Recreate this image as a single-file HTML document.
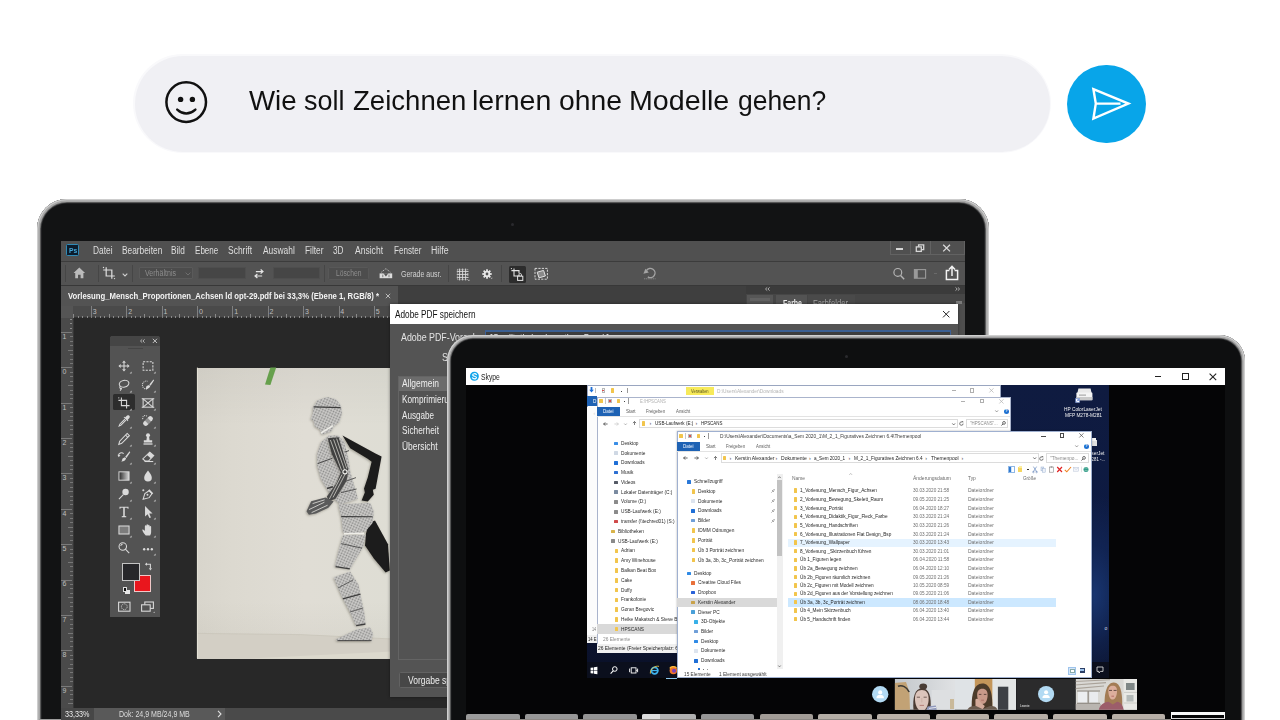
<!DOCTYPE html>
<html lang="de">
<head>
<meta charset="utf-8">
<title>Zeichnen lernen</title>
<style>
html,body{margin:0;padding:0;background:#fff;}
body{width:1280px;height:720px;overflow:hidden;position:relative;font-family:"Liberation Sans",sans-serif;color:#000;}
*{box-sizing:border-box;}
.abs,.abs>*{position:absolute;}
.t{position:absolute;white-space:nowrap;transform-origin:0 50%;line-height:1;}
svg{position:absolute;overflow:visible;}
/* page-coordinate canvas used inside clipped screens */
.pg{position:absolute;width:1280px;height:720px;}
</style>
</head>
<body>
<!-- ===== chat input ===== -->
<div style="position:absolute;left:133px;top:54px;width:918.4px;height:99.4px;border-radius:50px;background:#f9f9fb;"></div>
<div style="position:absolute;left:134.6px;top:56px;width:915.6px;height:95.8px;border-radius:48px;background:#f0f0f4;"></div>
<svg style="left:160px;top:76px" width="52" height="52" viewBox="160 76 52 52">
  <circle cx="186.2" cy="102.1" r="19.8" fill="none" stroke="#111" stroke-width="2.5"/>
  <circle cx="180.6" cy="99.4" r="2.7" fill="#111"/>
  <circle cx="192.4" cy="99.4" r="2.7" fill="#111"/>
  <path d="M177.2 109.6 Q186.2 117.6 195.4 109.6" fill="none" stroke="#111" stroke-width="2.4" stroke-linecap="round"/>
</svg>
<div class="t" style="left:249.0px;top:86.4px;font-size:28.2px;color:#111;transform:scaleX(0.980);">Wie</div>
<div class="t" style="left:304.0px;top:86.4px;font-size:28.2px;color:#111;transform:scaleX(0.956);">soll</div>
<div class="t" style="left:352.5px;top:86.4px;font-size:28.2px;color:#111;transform:scaleX(0.978);">Zeichnen</div>
<div class="t" style="left:472.3px;top:86.4px;font-size:28.2px;color:#111;transform:scaleX(1.013);">lernen</div>
<div class="t" style="left:559.0px;top:86.4px;font-size:28.2px;color:#111;transform:scaleX(1.004);">ohne</div>
<div class="t" style="left:629.4px;top:86.4px;font-size:28.2px;color:#111;transform:scaleX(1.016);">Modelle</div>
<div class="t" style="left:737.6px;top:86.4px;font-size:28.2px;color:#111;transform:scaleX(0.938);">gehen?</div>
<!-- send button -->
<div style="position:absolute;left:1067.4px;top:64.6px;width:78.4px;height:78.4px;border-radius:50%;background:#08a5e9;"></div>
<svg style="left:1067px;top:64px" width="80" height="80" viewBox="1067 64 80 80">
  <path d="M1093.4 89.2L1128.4 103.6L1093.4 118.6L1095.8 103.6Z M1095.8 103.6L1120.5 103.6" fill="none" stroke="#fff" stroke-width="2.4" stroke-linejoin="miter"/>
</svg>
<!-- ===== laptop 1 (Photoshop) ===== -->
<div style="position:absolute;left:37.4px;top:199.2px;width:951.2px;height:640px;border-radius:30px;background:#121314;box-shadow:inset 0 0 0 1.3px #cdcdcd,inset 0 0 0 3px #a6a6a6,inset 0 0 0 3.8px #666,inset 0 0 0 4.6px #2c2d2f;"></div>
<div style="position:absolute;left:511px;top:222.5px;width:3.4px;height:3.4px;border-radius:50%;background:#2a2a2e;"></div>
<!-- bottom strip --><div style="position:absolute;left:39px;top:718.8px;width:21.5px;height:1.2px;background:#9c9c9c;"></div>
<div id="ps" style="position:absolute;left:60.5px;top:240.7px;width:904.5px;height:480px;overflow:hidden;background:#282828;">
<div class="pg" style="left:-60.5px;top:-240.7px;">
<div style="position:absolute;left:60.5px;top:240.7px;width:904.5px;height:20.6px;background:#505050;"></div>
<div style="position:absolute;left:60.5px;top:240.4px;width:904.5px;height:1.0px;background:#6c6c6c;"></div>
<div style="position:absolute;left:60.5px;top:260.6px;width:904.5px;height:1.0px;background:#3c3c3c;"></div>
<div style="position:absolute;left:66.3px;top:244.2px;width:12.8px;height:11.7px;background:#0b1c2c;border:1px solid #2f8ab6;border-radius:1.5px;"></div>
<div class="t" style="left:68.6px;top:246.8px;font-size:7px;color:#45a9da;font-weight:bold;transform:scaleX(0.958);">Ps</div>
<div class="t" style="left:92.5px;top:245.6px;font-size:10px;color:#dedede;transform:scaleX(0.835);">Datei</div>
<div class="t" style="left:121.8px;top:245.6px;font-size:10px;color:#dedede;transform:scaleX(0.833);">Bearbeiten</div>
<div class="t" style="left:171.0px;top:245.6px;font-size:10px;color:#dedede;transform:scaleX(0.828);">Bild</div>
<div class="t" style="left:195.0px;top:245.6px;font-size:10px;color:#dedede;transform:scaleX(0.806);">Ebene</div>
<div class="t" style="left:228.0px;top:245.6px;font-size:10px;color:#dedede;transform:scaleX(0.847);">Schrift</div>
<div class="t" style="left:262.5px;top:245.6px;font-size:10px;color:#dedede;transform:scaleX(0.841);">Auswahl</div>
<div class="t" style="left:304.5px;top:245.6px;font-size:10px;color:#dedede;transform:scaleX(0.833);">Filter</div>
<div class="t" style="left:333.0px;top:245.6px;font-size:10px;color:#dedede;transform:scaleX(0.821);">3D</div>
<div class="t" style="left:354.5px;top:245.6px;font-size:10px;color:#dedede;transform:scaleX(0.854);">Ansicht</div>
<div class="t" style="left:393.8px;top:245.6px;font-size:10px;color:#dedede;transform:scaleX(0.811);">Fenster</div>
<div class="t" style="left:431.0px;top:245.6px;font-size:10px;color:#dedede;transform:scaleX(0.875);">Hilfe</div>
<div style="position:absolute;left:890px;top:241px;width:74.5px;height:13.5px;border:1px solid #626262;border-top:none;"></div>
<div style="position:absolute;left:910.0px;top:241.0px;width:1.0px;height:13.0px;background:#626262;"></div>
<div style="position:absolute;left:929.5px;top:241.0px;width:1.0px;height:13.0px;background:#626262;"></div>
<div style="position:absolute;left:896.3px;top:248.3px;width:7.2px;height:2.0px;background:#d6d6d6;"></div>
<svg style="left:914px;top:243px" width="12" height="10" viewBox="914 243 12 10"><path d="M918.6 246.8V244.9H923.7V249.6H921.6" fill="none" stroke="#d6d6d6" stroke-width="1.3"/><rect x="916.3" y="246.9" width="5" height="4.5" fill="none" stroke="#d6d6d6" stroke-width="1.3"/></svg>
<svg style="left:942px;top:244px" width="9" height="9" viewBox="942 244 9 9"><path d="M943.2 244.8L950 251.4M950 244.8L943.2 251.4" stroke="#dadada" stroke-width="1.3" fill="none"/></svg>
<div style="position:absolute;left:60.5px;top:261.6px;width:904.5px;height:23.2px;background:#535353;"></div>
<div style="position:absolute;left:60.5px;top:284.6px;width:904.5px;height:1.0px;background:#383838;"></div>
<svg style="left:73.4px;top:267.4px" width="13" height="12.1" viewBox="73 267 14 13"><path d="M79.8 267.6L73.6 273.4H75.4V279.2H78.4V275.4H81.2V279.2H84.2V273.4H86L79.8 267.6Z" fill="#bcbcbc"/></svg>
<div style="position:absolute;left:64.8px;top:265.2px;width:1.0px;height:16.4px;background:#464646;"></div>
<div style="position:absolute;left:97.9px;top:265.2px;width:1.0px;height:16.4px;background:#464646;"></div>
<div style="position:absolute;left:132.3px;top:265.2px;width:1.0px;height:16.4px;background:#464646;"></div>
<div style="position:absolute;left:323.9px;top:265.2px;width:1.0px;height:16.4px;background:#464646;"></div>
<div style="position:absolute;left:447.5px;top:265.2px;width:1.0px;height:16.4px;background:#464646;"></div>
<div style="position:absolute;left:501.3px;top:265.2px;width:1.0px;height:16.4px;background:#464646;"></div>
<svg style="left:101.2px;top:264.8px" width="16" height="16" viewBox="-8 -8 16 16"><g transform="scale(0.88)" fill="none" stroke="#dcdcdc" stroke-width="1.4"><path d="M-3.2 -6.6V3.4H6.6M-6.6 -3.4H3.2V6.6"/></g><circle cx="-5.5" cy="-5.5" r="0.7" fill="#dcdcdc"/><circle cx="5.5" cy="5.6" r="0.7" fill="#dcdcdc"/></svg>
<svg style="left:121.6px;top:273px" width="6" height="4" viewBox="0 0 6 4"><path d="M0.7 0.7L3 3L5.3 0.7" fill="none" stroke="#cfcfcf" stroke-width="1.1"/></svg>
<div style="position:absolute;left:138.8px;top:267.2px;width:53.8px;height:12px;background:#4c4c4c;border:1px solid #5a5a5a;border-radius:1px;"></div>
<div class="t" style="left:144.5px;top:269.1px;font-size:8.5px;color:#8d8d8d;transform:scaleX(0.830);">Verhältnis</div>
<svg style="left:185px;top:272px" width="6" height="4" viewBox="0 0 6 4"><path d="M0.6 0.6L3 3L5.4 0.6" fill="none" stroke="#6e6e6e" stroke-width="1"/></svg>
<div style="position:absolute;left:198.3px;top:267.2px;width:47.3px;height:12px;background:#464646;border:1px solid #4e4e4e;"></div>
<div style="position:absolute;left:272.5px;top:267.2px;width:47.5px;height:12px;background:#464646;border:1px solid #4e4e4e;"></div>
<svg style="left:253.9px;top:268.6px" width="10.2" height="9.4" viewBox="253 268 12 11"><path d="M255.2 271H263.4M260.8 268.6L263.6 271L260.8 273.4M262.6 276.2H254.4M257 273.8L254.2 276.2L257 278.6" fill="none" stroke="#e4e4e4" stroke-width="1.4"/></svg>
<div style="position:absolute;left:328px;top:266.6px;width:40.8px;height:13.4px;background:#4d4d4d;border:1px solid #585858;border-radius:1.5px;"></div>
<div class="t" style="left:336.0px;top:269.1px;font-size:8.5px;color:#8e8e8e;transform:scaleX(0.793);">Löschen</div>
<svg style="left:378px;top:267px" width="16" height="13" viewBox="378 267 16 13"><rect x="379.6" y="273.4" width="12.6" height="4.8" fill="#dcdcdc"/><path d="M383.4 273.2L385.9 276.6L388.4 273.2Z" fill="#535353"/><path d="M382.8 274.6V277.2M389 274.6V277.2" stroke="#535353" stroke-width="0.7"/><path d="M381.4 272.2L385.9 268.6L390.4 272.2" fill="none" stroke="#cfcfcf" stroke-width="0.9" stroke-dasharray="1.2 1"/></svg>
<div class="t" style="left:400.5px;top:269.5px;font-size:9px;color:#d2d2d2;transform:scaleX(0.778);">Gerade ausr.</div>
<svg style="left:456px;top:268px" width="14" height="14" viewBox="456 268 14 14"><path d="M459.6 268.6V280.4M462.6 268.6V280.4M465.6 268.6V280.4M456.8 271.4H468.4M456.8 274.4H468.4M456.8 277.4H468.4" stroke="#dedede" stroke-width="0.9" fill="none"/><path d="M457.4 269.4H467.8V279.6H457.4Z" stroke="#d0d0d0" stroke-width="0.8" fill="none" stroke-dasharray="1 1"/><path d="M469.4 279.4V281H467.8Z" fill="#cfcfcf"/></svg>
<svg style="left:480px;top:267.4px" width="14" height="14" viewBox="-8.6 -8.6 17.2 17.2"><g fill="#e6e6e6"><circle r="3.9"/><rect x="-1.1" y="-5.8" width="2.2" height="11.6"/><rect x="-5.8" y="-1.1" width="11.6" height="2.2"/><g transform="rotate(45)"><rect x="-1.1" y="-5.8" width="2.2" height="11.6"/><rect x="-5.8" y="-1.1" width="11.6" height="2.2"/></g></g><circle r="1.7" fill="#535353"/><path d="M4.6 5.8h1.8v-1.8z" fill="#d0d0d0"/></svg>
<div style="position:absolute;left:508.8px;top:266.0px;width:16.8px;height:17.0px;background:#2c2c2c;border-radius:1.5px;"></div>
<svg style="left:509px;top:266px" width="17" height="17" viewBox="509 266 17 17"><path d="M514 268.4V276H520.6M511.4 270.6H519V273.6" fill="none" stroke="#e4e4e4" stroke-width="1.1"/><circle cx="511.4" cy="268.6" r="0.6" fill="#e4e4e4"/><rect x="517.6" y="276.2" width="5.2" height="4.2" fill="#2c2c2c" stroke="#e4e4e4" stroke-width="1"/><path d="M518.9 276V274.8A1.3 1.3 0 0 1 521.5 274.8V276" fill="none" stroke="#e4e4e4" stroke-width="0.9"/></svg>
<svg style="left:534px;top:267px" width="15" height="14" viewBox="534 267 15 14"><rect x="535" y="268.4" width="12.4" height="10.8" fill="none" stroke="#d6d6d6" stroke-width="1" stroke-dasharray="2.2 1.2"/><path d="M537.2 272.2L543.6 270.4L545.4 276L539 277.8Z" fill="#8a8a8a" stroke="#e4e4e4" stroke-width="1"/></svg>
<svg style="left:642px;top:266px" width="16" height="15" viewBox="642 266 16 15"><path d="M646.6 270.4A4.6 4.6 0 1 1 647.8 276.8" fill="none" stroke="#a4a4a4" stroke-width="1.4"/><path d="M643.4 273.8L648.8 272.6L645.4 268.8Z" fill="#a4a4a4"/><path d="M644 278.8H655.6" stroke="#8c8c8c" stroke-width="0.9" stroke-dasharray="1.2 0.6"/></svg>
<svg style="left:892px;top:267px" width="14" height="14" viewBox="892 267 14 14"><circle cx="897.8" cy="272.4" r="3.9" fill="none" stroke="#b4b4b4" stroke-width="1.2"/><path d="M900.6 275.4L904.2 279.2" stroke="#b4b4b4" stroke-width="1.4"/></svg>
<svg style="left:913px;top:268px" width="14" height="12" viewBox="913 268 14 12"><rect x="914.4" y="269.6" width="11.2" height="8.6" fill="none" stroke="#9a9a9a" stroke-width="1.1"/><rect x="914.4" y="269.6" width="3.4" height="8.6" fill="#9a9a9a"/></svg>
<svg style="left:944px;top:265px" width="16" height="16" viewBox="944 265 16 16"><path d="M949.4 270.6H946.4V279.6H957.6V270.6H954.6" fill="none" stroke="#f2f2f2" stroke-width="1.5"/><path d="M952 276V266.8M949 269.6L952 266.4L955 269.6" fill="none" stroke="#f2f2f2" stroke-width="1.5"/></svg>
<div style="position:absolute;left:934.0px;top:273.4px;width:3.0px;height:1.0px;background:#6a6a6a;"></div>
<div style="position:absolute;left:60.5px;top:285.6px;width:904.5px;height:20.0px;background:#3f3f3f;"></div>
<div style="position:absolute;left:60.5px;top:285.6px;width:337.5px;height:20.0px;background:#535353;"></div>
<div class="t" style="left:68.0px;top:291.9px;font-size:9px;color:#f4f4f4;font-weight:bold;transform:scaleX(0.858);">Vorlesung_Mensch_Proportionen_Achsen ld opt-29.pdf bei 33,3% (Ebene 1, RGB/8) *</div>
<svg style="left:385px;top:293px" width="6" height="6" viewBox="0 0 6 6"><path d="M0.8 0.8L5.2 5.2M5.2 0.8L0.8 5.2" stroke="#b8b8b8" stroke-width="1"/></svg>
<div style="position:absolute;left:746.0px;top:285.6px;width:219.0px;height:8.0px;background:#3b3b3b;"></div>
<svg style="left:764.5px;top:287.4px" width="5" height="4" viewBox="0 0 5 4"><path d="M2.2 0.4L0.5 2L2.2 3.6M4.6 0.4L2.9 2L4.6 3.6" fill="none" stroke="#c8c8c8" stroke-width="0.8"/></svg>
<svg style="left:955.0px;top:287.4px" width="5" height="4" viewBox="0 0 5 4"><path d="M0.5 0.4L2.2 2L0.5 3.6M2.9 0.4L4.6 2L2.9 3.6" fill="none" stroke="#c8c8c8" stroke-width="0.8"/></svg>
<div style="position:absolute;left:746.0px;top:293.6px;width:219.0px;height:14.0px;background:#464646;"></div>
<div style="position:absolute;left:747.0px;top:294.6px;width:26.0px;height:13.0px;background:#565656;"></div>
<div style="position:absolute;left:776.0px;top:294.6px;width:30.5px;height:13.0px;background:#535353;"></div>
<div style="position:absolute;left:807.5px;top:294.6px;width:47.0px;height:13.0px;background:#4a4a4a;"></div>
<div class="t" style="left:783.0px;top:299.0px;font-size:9px;color:#f0f0f0;font-weight:bold;transform:scaleX(0.775);">Farbe</div>
<div class="t" style="left:813.0px;top:299.0px;font-size:9px;color:#a4a4a4;transform:scaleX(0.853);">Farbfelder</div>
<div style="position:absolute;left:750.0px;top:297.6px;width:20.0px;height:3.0px;background:#626262;"></div>
<div style="position:absolute;left:958.0px;top:303.0px;width:7.0px;height:420.0px;background:#4e4e4e;"></div>
<div style="position:absolute;left:955.5px;top:300.5px;width:6.0px;height:3.0px;background:#7a7a7a;"></div>
<div style="position:absolute;left:60.5px;top:305.6px;width:330.0px;height:12.6px;background:#4a4a4a;"></div>
<div style="position:absolute;left:60.5px;top:305.6px;width:12.0px;height:12.6px;background:#555555;"></div>
<div style="position:absolute;left:60.5px;top:318.2px;width:12.6px;height:390.0px;background:#4a4a4a;"></div>
<div style="position:absolute;left:72.5px;top:317.4px;width:320.0px;height:0.9px;background:#333;"></div>
<div style="position:absolute;left:72.6px;top:318.0px;width:0.8px;height:390.0px;background:#363636;"></div>
<div class="t" style="left:92.8px;top:307.5px;font-size:7px;color:#bdbdbd;">3</div>
<div class="t" style="left:128.2px;top:307.5px;font-size:7px;color:#bdbdbd;">2</div>
<div class="t" style="left:163.5px;top:307.5px;font-size:7px;color:#bdbdbd;">1</div>
<div class="t" style="left:198.9px;top:307.5px;font-size:7px;color:#bdbdbd;">0</div>
<div class="t" style="left:234.2px;top:307.5px;font-size:7px;color:#bdbdbd;">1</div>
<div class="t" style="left:269.6px;top:307.5px;font-size:7px;color:#bdbdbd;">2</div>
<div class="t" style="left:305.0px;top:307.5px;font-size:7px;color:#bdbdbd;">3</div>
<div class="t" style="left:340.3px;top:307.5px;font-size:7px;color:#bdbdbd;">4</div>
<div class="t" style="left:375.7px;top:307.5px;font-size:7px;color:#bdbdbd;">5</div>
<div class="t" style="left:62.6px;top:332.9px;font-size:7px;color:#bdbdbd;">1</div>
<div class="t" style="left:62.6px;top:368.3px;font-size:7px;color:#bdbdbd;">0</div>
<div class="t" style="left:62.6px;top:403.6px;font-size:7px;color:#bdbdbd;">1</div>
<div class="t" style="left:62.6px;top:439.0px;font-size:7px;color:#bdbdbd;">2</div>
<div class="t" style="left:62.6px;top:474.3px;font-size:7px;color:#bdbdbd;">3</div>
<div class="t" style="left:62.6px;top:509.7px;font-size:7px;color:#bdbdbd;">4</div>
<div class="t" style="left:62.6px;top:545.1px;font-size:7px;color:#bdbdbd;">5</div>
<div class="t" style="left:62.6px;top:580.4px;font-size:7px;color:#bdbdbd;">6</div>
<div class="t" style="left:62.6px;top:615.8px;font-size:7px;color:#bdbdbd;">7</div>
<div class="t" style="left:62.6px;top:651.1px;font-size:7px;color:#bdbdbd;">8</div>
<div class="t" style="left:62.6px;top:686.5px;font-size:7px;color:#bdbdbd;">9</div>
<div style="position:absolute;left:91.0px;top:305.8px;width:0.9px;height:12.0px;background:#808080;"></div>
<div style="position:absolute;left:95.4px;top:315.8px;width:0.8px;height:2.2px;background:#8a8a8a;"></div>
<div style="position:absolute;left:99.8px;top:315.8px;width:0.8px;height:2.2px;background:#8a8a8a;"></div>
<div style="position:absolute;left:104.3px;top:315.8px;width:0.8px;height:2.2px;background:#8a8a8a;"></div>
<div style="position:absolute;left:108.7px;top:313.8px;width:0.8px;height:4.2px;background:#8a8a8a;"></div>
<div style="position:absolute;left:113.1px;top:315.8px;width:0.8px;height:2.2px;background:#8a8a8a;"></div>
<div style="position:absolute;left:117.5px;top:315.8px;width:0.8px;height:2.2px;background:#8a8a8a;"></div>
<div style="position:absolute;left:121.9px;top:315.8px;width:0.8px;height:2.2px;background:#8a8a8a;"></div>
<div style="position:absolute;left:126.4px;top:305.8px;width:0.9px;height:12.0px;background:#808080;"></div>
<div style="position:absolute;left:130.8px;top:315.8px;width:0.8px;height:2.2px;background:#8a8a8a;"></div>
<div style="position:absolute;left:135.2px;top:315.8px;width:0.8px;height:2.2px;background:#8a8a8a;"></div>
<div style="position:absolute;left:139.6px;top:315.8px;width:0.8px;height:2.2px;background:#8a8a8a;"></div>
<div style="position:absolute;left:144.0px;top:313.8px;width:0.8px;height:4.2px;background:#8a8a8a;"></div>
<div style="position:absolute;left:148.5px;top:315.8px;width:0.8px;height:2.2px;background:#8a8a8a;"></div>
<div style="position:absolute;left:152.9px;top:315.8px;width:0.8px;height:2.2px;background:#8a8a8a;"></div>
<div style="position:absolute;left:157.3px;top:315.8px;width:0.8px;height:2.2px;background:#8a8a8a;"></div>
<div style="position:absolute;left:161.7px;top:305.8px;width:0.9px;height:12.0px;background:#808080;"></div>
<div style="position:absolute;left:166.1px;top:315.8px;width:0.8px;height:2.2px;background:#8a8a8a;"></div>
<div style="position:absolute;left:170.6px;top:315.8px;width:0.8px;height:2.2px;background:#8a8a8a;"></div>
<div style="position:absolute;left:175.0px;top:315.8px;width:0.8px;height:2.2px;background:#8a8a8a;"></div>
<div style="position:absolute;left:179.4px;top:313.8px;width:0.8px;height:4.2px;background:#8a8a8a;"></div>
<div style="position:absolute;left:183.8px;top:315.8px;width:0.8px;height:2.2px;background:#8a8a8a;"></div>
<div style="position:absolute;left:188.2px;top:315.8px;width:0.8px;height:2.2px;background:#8a8a8a;"></div>
<div style="position:absolute;left:192.7px;top:315.8px;width:0.8px;height:2.2px;background:#8a8a8a;"></div>
<div style="position:absolute;left:197.1px;top:305.8px;width:0.9px;height:12.0px;background:#808080;"></div>
<div style="position:absolute;left:201.5px;top:315.8px;width:0.8px;height:2.2px;background:#8a8a8a;"></div>
<div style="position:absolute;left:205.9px;top:315.8px;width:0.8px;height:2.2px;background:#8a8a8a;"></div>
<div style="position:absolute;left:210.3px;top:315.8px;width:0.8px;height:2.2px;background:#8a8a8a;"></div>
<div style="position:absolute;left:214.8px;top:313.8px;width:0.8px;height:4.2px;background:#8a8a8a;"></div>
<div style="position:absolute;left:219.2px;top:315.8px;width:0.8px;height:2.2px;background:#8a8a8a;"></div>
<div style="position:absolute;left:223.6px;top:315.8px;width:0.8px;height:2.2px;background:#8a8a8a;"></div>
<div style="position:absolute;left:228.0px;top:315.8px;width:0.8px;height:2.2px;background:#8a8a8a;"></div>
<div style="position:absolute;left:232.4px;top:305.8px;width:0.9px;height:12.0px;background:#808080;"></div>
<div style="position:absolute;left:236.9px;top:315.8px;width:0.8px;height:2.2px;background:#8a8a8a;"></div>
<div style="position:absolute;left:241.3px;top:315.8px;width:0.8px;height:2.2px;background:#8a8a8a;"></div>
<div style="position:absolute;left:245.7px;top:315.8px;width:0.8px;height:2.2px;background:#8a8a8a;"></div>
<div style="position:absolute;left:250.1px;top:313.8px;width:0.8px;height:4.2px;background:#8a8a8a;"></div>
<div style="position:absolute;left:254.5px;top:315.8px;width:0.8px;height:2.2px;background:#8a8a8a;"></div>
<div style="position:absolute;left:259.0px;top:315.8px;width:0.8px;height:2.2px;background:#8a8a8a;"></div>
<div style="position:absolute;left:263.4px;top:315.8px;width:0.8px;height:2.2px;background:#8a8a8a;"></div>
<div style="position:absolute;left:267.8px;top:305.8px;width:0.9px;height:12.0px;background:#808080;"></div>
<div style="position:absolute;left:272.2px;top:315.8px;width:0.8px;height:2.2px;background:#8a8a8a;"></div>
<div style="position:absolute;left:276.6px;top:315.8px;width:0.8px;height:2.2px;background:#8a8a8a;"></div>
<div style="position:absolute;left:281.1px;top:315.8px;width:0.8px;height:2.2px;background:#8a8a8a;"></div>
<div style="position:absolute;left:285.5px;top:313.8px;width:0.8px;height:4.2px;background:#8a8a8a;"></div>
<div style="position:absolute;left:289.9px;top:315.8px;width:0.8px;height:2.2px;background:#8a8a8a;"></div>
<div style="position:absolute;left:294.3px;top:315.8px;width:0.8px;height:2.2px;background:#8a8a8a;"></div>
<div style="position:absolute;left:298.7px;top:315.8px;width:0.8px;height:2.2px;background:#8a8a8a;"></div>
<div style="position:absolute;left:303.2px;top:305.8px;width:0.9px;height:12.0px;background:#808080;"></div>
<div style="position:absolute;left:307.6px;top:315.8px;width:0.8px;height:2.2px;background:#8a8a8a;"></div>
<div style="position:absolute;left:312.0px;top:315.8px;width:0.8px;height:2.2px;background:#8a8a8a;"></div>
<div style="position:absolute;left:316.4px;top:315.8px;width:0.8px;height:2.2px;background:#8a8a8a;"></div>
<div style="position:absolute;left:320.8px;top:313.8px;width:0.8px;height:4.2px;background:#8a8a8a;"></div>
<div style="position:absolute;left:325.3px;top:315.8px;width:0.8px;height:2.2px;background:#8a8a8a;"></div>
<div style="position:absolute;left:329.7px;top:315.8px;width:0.8px;height:2.2px;background:#8a8a8a;"></div>
<div style="position:absolute;left:334.1px;top:315.8px;width:0.8px;height:2.2px;background:#8a8a8a;"></div>
<div style="position:absolute;left:338.5px;top:305.8px;width:0.9px;height:12.0px;background:#808080;"></div>
<div style="position:absolute;left:342.9px;top:315.8px;width:0.8px;height:2.2px;background:#8a8a8a;"></div>
<div style="position:absolute;left:347.4px;top:315.8px;width:0.8px;height:2.2px;background:#8a8a8a;"></div>
<div style="position:absolute;left:351.8px;top:315.8px;width:0.8px;height:2.2px;background:#8a8a8a;"></div>
<div style="position:absolute;left:356.2px;top:313.8px;width:0.8px;height:4.2px;background:#8a8a8a;"></div>
<div style="position:absolute;left:360.6px;top:315.8px;width:0.8px;height:2.2px;background:#8a8a8a;"></div>
<div style="position:absolute;left:365.0px;top:315.8px;width:0.8px;height:2.2px;background:#8a8a8a;"></div>
<div style="position:absolute;left:369.5px;top:315.8px;width:0.8px;height:2.2px;background:#8a8a8a;"></div>
<div style="position:absolute;left:373.9px;top:305.8px;width:0.9px;height:12.0px;background:#808080;"></div>
<div style="position:absolute;left:378.3px;top:315.8px;width:0.8px;height:2.2px;background:#8a8a8a;"></div>
<div style="position:absolute;left:382.7px;top:315.8px;width:0.8px;height:2.2px;background:#8a8a8a;"></div>
<div style="position:absolute;left:387.1px;top:315.8px;width:0.8px;height:2.2px;background:#8a8a8a;"></div>
<div style="position:absolute;left:391.6px;top:313.8px;width:0.8px;height:4.2px;background:#8a8a8a;"></div>
<div style="position:absolute;left:86.6px;top:315.8px;width:0.8px;height:2.2px;background:#8a8a8a;"></div>
<div style="position:absolute;left:82.2px;top:315.8px;width:0.8px;height:2.2px;background:#8a8a8a;"></div>
<div style="position:absolute;left:77.7px;top:315.8px;width:0.8px;height:2.2px;background:#8a8a8a;"></div>
<div style="position:absolute;left:73.3px;top:313.8px;width:0.8px;height:4.2px;background:#8a8a8a;"></div>
<div style="position:absolute;left:60.8px;top:332.0px;width:11.6px;height:0.9px;background:#7a7a7a;"></div>
<div style="position:absolute;left:70.4px;top:336.4px;width:2.2px;height:0.8px;background:#767676;"></div>
<div style="position:absolute;left:70.4px;top:340.8px;width:2.2px;height:0.8px;background:#767676;"></div>
<div style="position:absolute;left:70.4px;top:345.3px;width:2.2px;height:0.8px;background:#767676;"></div>
<div style="position:absolute;left:68.4px;top:349.7px;width:4.2px;height:0.8px;background:#767676;"></div>
<div style="position:absolute;left:70.4px;top:354.1px;width:2.2px;height:0.8px;background:#767676;"></div>
<div style="position:absolute;left:70.4px;top:358.5px;width:2.2px;height:0.8px;background:#767676;"></div>
<div style="position:absolute;left:70.4px;top:362.9px;width:2.2px;height:0.8px;background:#767676;"></div>
<div style="position:absolute;left:60.8px;top:367.4px;width:11.6px;height:0.9px;background:#7a7a7a;"></div>
<div style="position:absolute;left:70.4px;top:371.8px;width:2.2px;height:0.8px;background:#767676;"></div>
<div style="position:absolute;left:70.4px;top:376.2px;width:2.2px;height:0.8px;background:#767676;"></div>
<div style="position:absolute;left:70.4px;top:380.6px;width:2.2px;height:0.8px;background:#767676;"></div>
<div style="position:absolute;left:68.4px;top:385.0px;width:4.2px;height:0.8px;background:#767676;"></div>
<div style="position:absolute;left:70.4px;top:389.5px;width:2.2px;height:0.8px;background:#767676;"></div>
<div style="position:absolute;left:70.4px;top:393.9px;width:2.2px;height:0.8px;background:#767676;"></div>
<div style="position:absolute;left:70.4px;top:398.3px;width:2.2px;height:0.8px;background:#767676;"></div>
<div style="position:absolute;left:60.8px;top:402.7px;width:11.6px;height:0.9px;background:#7a7a7a;"></div>
<div style="position:absolute;left:70.4px;top:407.1px;width:2.2px;height:0.8px;background:#767676;"></div>
<div style="position:absolute;left:70.4px;top:411.6px;width:2.2px;height:0.8px;background:#767676;"></div>
<div style="position:absolute;left:70.4px;top:416.0px;width:2.2px;height:0.8px;background:#767676;"></div>
<div style="position:absolute;left:68.4px;top:420.4px;width:4.2px;height:0.8px;background:#767676;"></div>
<div style="position:absolute;left:70.4px;top:424.8px;width:2.2px;height:0.8px;background:#767676;"></div>
<div style="position:absolute;left:70.4px;top:429.2px;width:2.2px;height:0.8px;background:#767676;"></div>
<div style="position:absolute;left:70.4px;top:433.7px;width:2.2px;height:0.8px;background:#767676;"></div>
<div style="position:absolute;left:60.8px;top:438.1px;width:11.6px;height:0.9px;background:#7a7a7a;"></div>
<div style="position:absolute;left:70.4px;top:442.5px;width:2.2px;height:0.8px;background:#767676;"></div>
<div style="position:absolute;left:70.4px;top:446.9px;width:2.2px;height:0.8px;background:#767676;"></div>
<div style="position:absolute;left:70.4px;top:451.3px;width:2.2px;height:0.8px;background:#767676;"></div>
<div style="position:absolute;left:68.4px;top:455.8px;width:4.2px;height:0.8px;background:#767676;"></div>
<div style="position:absolute;left:70.4px;top:460.2px;width:2.2px;height:0.8px;background:#767676;"></div>
<div style="position:absolute;left:70.4px;top:464.6px;width:2.2px;height:0.8px;background:#767676;"></div>
<div style="position:absolute;left:70.4px;top:469.0px;width:2.2px;height:0.8px;background:#767676;"></div>
<div style="position:absolute;left:60.8px;top:473.4px;width:11.6px;height:0.9px;background:#7a7a7a;"></div>
<div style="position:absolute;left:70.4px;top:477.9px;width:2.2px;height:0.8px;background:#767676;"></div>
<div style="position:absolute;left:70.4px;top:482.3px;width:2.2px;height:0.8px;background:#767676;"></div>
<div style="position:absolute;left:70.4px;top:486.7px;width:2.2px;height:0.8px;background:#767676;"></div>
<div style="position:absolute;left:68.4px;top:491.1px;width:4.2px;height:0.8px;background:#767676;"></div>
<div style="position:absolute;left:70.4px;top:495.5px;width:2.2px;height:0.8px;background:#767676;"></div>
<div style="position:absolute;left:70.4px;top:500.0px;width:2.2px;height:0.8px;background:#767676;"></div>
<div style="position:absolute;left:70.4px;top:504.4px;width:2.2px;height:0.8px;background:#767676;"></div>
<div style="position:absolute;left:60.8px;top:508.8px;width:11.6px;height:0.9px;background:#7a7a7a;"></div>
<div style="position:absolute;left:70.4px;top:513.2px;width:2.2px;height:0.8px;background:#767676;"></div>
<div style="position:absolute;left:70.4px;top:517.6px;width:2.2px;height:0.8px;background:#767676;"></div>
<div style="position:absolute;left:70.4px;top:522.1px;width:2.2px;height:0.8px;background:#767676;"></div>
<div style="position:absolute;left:68.4px;top:526.5px;width:4.2px;height:0.8px;background:#767676;"></div>
<div style="position:absolute;left:70.4px;top:530.9px;width:2.2px;height:0.8px;background:#767676;"></div>
<div style="position:absolute;left:70.4px;top:535.3px;width:2.2px;height:0.8px;background:#767676;"></div>
<div style="position:absolute;left:70.4px;top:539.7px;width:2.2px;height:0.8px;background:#767676;"></div>
<div style="position:absolute;left:60.8px;top:544.2px;width:11.6px;height:0.9px;background:#7a7a7a;"></div>
<div style="position:absolute;left:70.4px;top:548.6px;width:2.2px;height:0.8px;background:#767676;"></div>
<div style="position:absolute;left:70.4px;top:553.0px;width:2.2px;height:0.8px;background:#767676;"></div>
<div style="position:absolute;left:70.4px;top:557.4px;width:2.2px;height:0.8px;background:#767676;"></div>
<div style="position:absolute;left:68.4px;top:561.8px;width:4.2px;height:0.8px;background:#767676;"></div>
<div style="position:absolute;left:70.4px;top:566.3px;width:2.2px;height:0.8px;background:#767676;"></div>
<div style="position:absolute;left:70.4px;top:570.7px;width:2.2px;height:0.8px;background:#767676;"></div>
<div style="position:absolute;left:70.4px;top:575.1px;width:2.2px;height:0.8px;background:#767676;"></div>
<div style="position:absolute;left:60.8px;top:579.5px;width:11.6px;height:0.9px;background:#7a7a7a;"></div>
<div style="position:absolute;left:70.4px;top:583.9px;width:2.2px;height:0.8px;background:#767676;"></div>
<div style="position:absolute;left:70.4px;top:588.4px;width:2.2px;height:0.8px;background:#767676;"></div>
<div style="position:absolute;left:70.4px;top:592.8px;width:2.2px;height:0.8px;background:#767676;"></div>
<div style="position:absolute;left:68.4px;top:597.2px;width:4.2px;height:0.8px;background:#767676;"></div>
<div style="position:absolute;left:70.4px;top:601.6px;width:2.2px;height:0.8px;background:#767676;"></div>
<div style="position:absolute;left:70.4px;top:606.0px;width:2.2px;height:0.8px;background:#767676;"></div>
<div style="position:absolute;left:70.4px;top:610.5px;width:2.2px;height:0.8px;background:#767676;"></div>
<div style="position:absolute;left:60.8px;top:614.9px;width:11.6px;height:0.9px;background:#7a7a7a;"></div>
<div style="position:absolute;left:70.4px;top:619.3px;width:2.2px;height:0.8px;background:#767676;"></div>
<div style="position:absolute;left:70.4px;top:623.7px;width:2.2px;height:0.8px;background:#767676;"></div>
<div style="position:absolute;left:70.4px;top:628.1px;width:2.2px;height:0.8px;background:#767676;"></div>
<div style="position:absolute;left:68.4px;top:632.6px;width:4.2px;height:0.8px;background:#767676;"></div>
<div style="position:absolute;left:70.4px;top:637.0px;width:2.2px;height:0.8px;background:#767676;"></div>
<div style="position:absolute;left:70.4px;top:641.4px;width:2.2px;height:0.8px;background:#767676;"></div>
<div style="position:absolute;left:70.4px;top:645.8px;width:2.2px;height:0.8px;background:#767676;"></div>
<div style="position:absolute;left:60.8px;top:650.2px;width:11.6px;height:0.9px;background:#7a7a7a;"></div>
<div style="position:absolute;left:70.4px;top:654.7px;width:2.2px;height:0.8px;background:#767676;"></div>
<div style="position:absolute;left:70.4px;top:659.1px;width:2.2px;height:0.8px;background:#767676;"></div>
<div style="position:absolute;left:70.4px;top:663.5px;width:2.2px;height:0.8px;background:#767676;"></div>
<div style="position:absolute;left:68.4px;top:667.9px;width:4.2px;height:0.8px;background:#767676;"></div>
<div style="position:absolute;left:70.4px;top:672.3px;width:2.2px;height:0.8px;background:#767676;"></div>
<div style="position:absolute;left:70.4px;top:676.8px;width:2.2px;height:0.8px;background:#767676;"></div>
<div style="position:absolute;left:70.4px;top:681.2px;width:2.2px;height:0.8px;background:#767676;"></div>
<div style="position:absolute;left:60.8px;top:685.6px;width:11.6px;height:0.9px;background:#7a7a7a;"></div>
<div style="position:absolute;left:70.4px;top:690.0px;width:2.2px;height:0.8px;background:#767676;"></div>
<div style="position:absolute;left:70.4px;top:694.4px;width:2.2px;height:0.8px;background:#767676;"></div>
<div style="position:absolute;left:70.4px;top:698.9px;width:2.2px;height:0.8px;background:#767676;"></div>
<div style="position:absolute;left:68.4px;top:703.3px;width:4.2px;height:0.8px;background:#767676;"></div>
<div style="position:absolute;left:69.8px;top:327.6px;width:2.2px;height:0.8px;background:#8a8a8a;"></div>
<div style="position:absolute;left:69.8px;top:323.2px;width:2.2px;height:0.8px;background:#8a8a8a;"></div>
<div style="position:absolute;left:69.8px;top:318.7px;width:2.2px;height:0.8px;background:#8a8a8a;"></div>
<div style="position:absolute;left:60.5px;top:708.0px;width:904.5px;height:12.0px;background:#4a4a4a;"></div>
<div style="position:absolute;left:60.5px;top:708.0px;width:33.5px;height:12.0px;background:#474747;"></div>
<div style="position:absolute;left:94.0px;top:708.0px;width:130.5px;height:12.0px;background:#595959;"></div>
<div class="t" style="left:65.2px;top:710.1px;font-size:8.5px;color:#ececec;transform:scaleX(0.850);">33,33%</div>
<div class="t" style="left:119.4px;top:710.1px;font-size:8.5px;color:#dcdcdc;transform:scaleX(0.828);">Dok: 24,9 MB/24,9 MB</div>
<svg style="left:217px;top:710px" width="5" height="8" viewBox="0 0 5 8"><path d="M1 0.8L4 4L1 7.2" fill="none" stroke="#e0e0e0" stroke-width="1.1"/></svg>
<div style="position:absolute;left:110.4px;top:335.8px;width:49.8px;height:281.4px;background:#535353;border-radius:2.5px 2.5px 0 0;"></div>
<div style="position:absolute;left:110.4px;top:335.8px;width:49.8px;height:10.0px;background:#454545;border-radius:2.5px 2.5px 0 0;"></div>
<svg style="left:139.5px;top:338.8px" width="5" height="4" viewBox="0 0 5 4"><path d="M2.2 0.4L0.5 2L2.2 3.6M4.6 0.4L2.9 2L4.6 3.6" fill="none" stroke="#cfcfcf" stroke-width="0.8"/></svg>
<svg style="left:152px;top:338px" width="6" height="6" viewBox="0 0 6 6"><path d="M0.8 0.8L5 5M5 0.8L0.8 5" stroke="#cdcdcd" stroke-width="0.9"/></svg>
<div style="position:absolute;left:128.0px;top:348.0px;width:14.5px;height:1.2px;background:#454545;"></div>
<div style="position:absolute;left:113.4px;top:394.2px;width:21.6px;height:16.2px;background:#2d2d2d;border-radius:1.5px;"></div>
<svg style="left:115.3px;top:356.8px" width="18" height="18" viewBox="-9 -9 18 18"><g transform="scale(0.87)"><path d="M0 -6.4L2.2 -3.8H-2.2ZM0 6.4L2.2 3.8H-2.2ZM-6.4 0L-3.8 -2.2V2.2ZM6.4 0L3.8 -2.2V2.2Z" fill="#dadada"/><path d="M0 -4V4M-4 0H4" fill="none" stroke="#dadada" stroke-width="1.2" stroke-width="1.4"/></g><path d="M7.6 5.6V7.6H5.6Z" fill="#c8c8c8"/></svg>
<svg style="left:138.8px;top:356.8px" width="18" height="18" viewBox="-9 -9 18 18"><g transform="scale(0.87)"><rect x="-5.6" y="-4.8" width="11.2" height="9.6" fill="none" stroke="#dadada" stroke-width="1.2" stroke-dasharray="2.4 1.4"/></g><path d="M7.6 5.6V7.6H5.6Z" fill="#c8c8c8"/></svg>
<svg style="left:115.3px;top:375.6px" width="18" height="18" viewBox="-9 -9 18 18"><g transform="scale(0.87)"><ellipse cx="0.4" cy="-1.4" rx="5.6" ry="3.9" fill="none" stroke="#dadada" stroke-width="1.2" transform="rotate(-12)"/><path d="M-4.2 1.4C-5.6 2.6 -4.4 4.6 -2.6 3.8C-3.6 5 -3.8 5.8 -4.6 6.4" fill="none" stroke="#dadada" stroke-width="1.2" stroke-width="1"/></g><path d="M7.6 5.6V7.6H5.6Z" fill="#c8c8c8"/></svg>
<svg style="left:138.8px;top:375.6px" width="18" height="18" viewBox="-9 -9 18 18"><g transform="scale(0.87)"><path d="M-1.2 4.6A4.4 4.6 0 1 1 -0.4 -4.2" fill="none" stroke="#dadada" stroke-width="1.2" stroke-width="1" stroke-dasharray="1.2 1"/><path d="M6.2 -6.2L1.6 -0.6L3 0.8L7 -5.4Z" fill="#dadada"/><path d="M1.2 0L-1.6 1.2C-2.4 2.6 -1.8 3.6 -3 4.6C-0.6 4.8 1.6 3.8 2.6 1.4Z" fill="#dadada"/></g><path d="M7.6 5.6V7.6H5.6Z" fill="#c8c8c8"/></svg>
<svg style="left:115.3px;top:393.5px" width="18" height="18" viewBox="-9 -9 18 18"><g transform="scale(0.87)"><path d="M-3 -6.4V3H6.4M-6.4 -3H3V6.4" fill="none" stroke="#dadada" stroke-width="1.2" stroke-width="1.5"/><circle cx="-6" cy="-6" r="0.7" fill="#dadada"/></g><path d="M7.6 5.6V7.6H5.6Z" fill="#c8c8c8"/></svg>
<svg style="left:138.8px;top:393.5px" width="18" height="18" viewBox="-9 -9 18 18"><g transform="scale(0.87)"><rect x="-5.6" y="-4.8" width="11.2" height="9.6" fill="none" stroke="#dadada" stroke-width="1.2"/><path d="M-5.6 -4.8L5.6 4.8M5.6 -4.8L-5.6 4.8" fill="none" stroke="#dadada" stroke-width="1.2" stroke-width="1"/><path d="M-7.2 -4.8H-5.6M5.6 -4.8H7.2M-7.2 4.8H-5.6M5.6 4.8H7.2" fill="none" stroke="#dadada" stroke-width="1.2" stroke-width="1"/></g><path d="M7.6 5.6V7.6H5.6Z" fill="#c8c8c8"/></svg>
<svg style="left:115.3px;top:411.8px" width="18" height="18" viewBox="-9 -9 18 18"><g transform="scale(0.87)"><path d="M5.8 -6.2C7.2 -5.2 6.8 -3.6 5.4 -2.6L3.8 -1L1 -3.8L2.6 -5.4C3.6 -6.8 4.8 -7 5.8 -6.2Z" fill="#dadada"/><path d="M0 -4.6L4.6 0" fill="none" stroke="#dadada" stroke-width="1.2" stroke-width="1.6"/><path d="M1 -2.2L-4.6 3.4L-5.6 5.8L-3.4 4.8L2.2 -1" fill="none" stroke="#dadada" stroke-width="1.2" stroke-width="1.1"/></g><path d="M7.6 5.6V7.6H5.6Z" fill="#c8c8c8"/></svg>
<svg style="left:138.8px;top:411.8px" width="18" height="18" viewBox="-9 -9 18 18"><g transform="scale(0.87)"><g transform="rotate(-45)"><rect x="-6.6" y="-2.9" width="13.2" height="5.8" rx="2.6" fill="#dadada"/><rect x="-2.2" y="-2.9" width="4.4" height="5.8" fill="#535353" opacity=".55"/></g><path d="M-1.2 -5.6A3 3 0 0 0 -5.6 -1.6" fill="none" stroke="#dadada" stroke-width="1.2" stroke-width="1" stroke-dasharray="1.2 1"/></g><path d="M7.6 5.6V7.6H5.6Z" fill="#c8c8c8"/></svg>
<svg style="left:115.3px;top:430.2px" width="18" height="18" viewBox="-9 -9 18 18"><g transform="scale(0.87)"><path d="M3.6 -6.4L6.2 -3.8L-2.6 5L-6 6.2L-5 2.6Z" fill="none" stroke="#dadada" stroke-width="1.2" stroke-width="1.2"/><path d="M1.8 -4.6L4.4 -2" fill="none" stroke="#dadada" stroke-width="1.2" stroke-width="1"/></g><path d="M7.6 5.6V7.6H5.6Z" fill="#c8c8c8"/></svg>
<svg style="left:138.8px;top:430.2px" width="18" height="18" viewBox="-9 -9 18 18"><g transform="scale(0.87)"><circle cx="0" cy="-4.2" r="2.3" fill="#dadada"/><path d="M-1.3 -2.6H1.3L1.8 1.4H4.8V4H-4.8V1.4H-1.8Z" fill="#dadada"/><rect x="-5.2" y="5" width="10.4" height="1.5" fill="#dadada"/></g><path d="M7.6 5.6V7.6H5.6Z" fill="#c8c8c8"/></svg>
<svg style="left:115.3px;top:448.4px" width="18" height="18" viewBox="-9 -9 18 18"><g transform="scale(0.87)"><path d="M6.4 -6.6L1.4 -0.2L2.8 1.2L7.2 -5.6Z" fill="#dadada"/><path d="M1 0.4L-1.6 1.6C-2.4 3 -1.8 4 -3.2 5.2C-0.6 5.4 1.6 4.2 2.4 1.8Z" fill="#dadada"/><path d="M-6.4 -1.4A3.6 3.6 0 0 1 -0.4 -4" fill="none" stroke="#dadada" stroke-width="1.2" stroke-width="1.1"/><path d="M-7.4 -2.6L-6.2 0.2L-4 -2Z" fill="#dadada"/></g><path d="M7.6 5.6V7.6H5.6Z" fill="#c8c8c8"/></svg>
<svg style="left:138.8px;top:448.4px" width="18" height="18" viewBox="-9 -9 18 18"><g transform="scale(0.87)"><path d="M2 -5.6L6.6 -1.8L0.6 4.6H-3.2L-6 2.2Z" fill="none" stroke="#dadada" stroke-width="1.2"/><path d="M2 -5.6L6.6 -1.8L3.4 1.6L-1.2 -2.2Z" fill="#dadada"/><path d="M-4 5.2H6" fill="none" stroke="#dadada" stroke-width="1.2" stroke-width="1"/></g><path d="M7.6 5.6V7.6H5.6Z" fill="#c8c8c8"/></svg>
<svg style="left:115.3px;top:466.6px" width="18" height="18" viewBox="-9 -9 18 18"><g transform="scale(0.87)"><defs><linearGradient id="gg" x1="0" x2="1"><stop offset="0" stop-color="#2a2a2a"/><stop offset="1" stop-color="#d8d8d8"/></linearGradient></defs><rect x="-5.8" y="-4.8" width="11.6" height="9.6" fill="url(#gg)" stroke="#dadada" stroke-width="1.1"/></g><path d="M7.6 5.6V7.6H5.6Z" fill="#c8c8c8"/></svg>
<svg style="left:138.8px;top:466.6px" width="18" height="18" viewBox="-9 -9 18 18"><g transform="scale(0.87)"><path d="M0 -6.4C2.4 -3 4.4 -0.8 4.4 2A4.4 4.4 0 0 1 -4.4 2C-4.4 -0.8 -2.4 -3 0 -6.4Z" fill="#dadada"/></g><path d="M7.6 5.6V7.6H5.6Z" fill="#c8c8c8"/></svg>
<svg style="left:115.3px;top:484.8px" width="18" height="18" viewBox="-9 -9 18 18"><g transform="scale(0.87)"><circle cx="1.8" cy="-2.4" r="3.7" fill="#dadada"/><path d="M-0.8 0.6L-5.8 6" fill="none" stroke="#dadada" stroke-width="1.2" stroke-width="1.7"/></g><path d="M7.6 5.6V7.6H5.6Z" fill="#c8c8c8"/></svg>
<svg style="left:138.8px;top:484.8px" width="18" height="18" viewBox="-9 -9 18 18"><g transform="scale(0.87)"><path d="M-5.6 6L-3.6 -0.6L1.2 -3.8L4.6 -0.4L1.4 4.2Z" fill="none" stroke="#dadada" stroke-width="1.2" stroke-width="1.1"/><path d="M1.6 -5.4L6 -1L4.6 0.4L0.2 -4Z" fill="#dadada"/><circle cx="-0.6" cy="0.8" r="1.1" fill="#dadada"/><path d="M-5.4 -5.6L-5.4 -3.2M-6.6 -4.4H-4.2" fill="none" stroke="#dadada" stroke-width="1.2" stroke-width="0.9"/></g><path d="M7.6 5.6V7.6H5.6Z" fill="#c8c8c8"/></svg>
<svg style="left:115.3px;top:503.0px" width="18" height="18" viewBox="-9 -9 18 18"><g transform="scale(0.87)"><path d="M-5.2 -6H5.2V-3.6H4.2L3.8 -4.8H0.9V4.6L2.6 5V6H-2.6V5L-0.9 4.6V-4.8H-3.8L-4.2 -3.6H-5.2Z" fill="#dadada"/></g><path d="M7.6 5.6V7.6H5.6Z" fill="#c8c8c8"/></svg>
<svg style="left:138.8px;top:503.0px" width="18" height="18" viewBox="-9 -9 18 18"><g transform="scale(0.87)"><path d="M-3.4 -6.8V5.2L-0.4 2.6L1.6 7L3.4 6.2L1.4 1.8H5.2Z" fill="#dadada"/></g><path d="M7.6 5.6V7.6H5.6Z" fill="#c8c8c8"/></svg>
<svg style="left:115.3px;top:521.2px" width="18" height="18" viewBox="-9 -9 18 18"><g transform="scale(0.87)"><rect x="-5.8" y="-4.6" width="11.6" height="9.2" fill="#7c7c7c" stroke="#dadada" stroke-width="1.2"/></g><path d="M7.6 5.6V7.6H5.6Z" fill="#c8c8c8"/></svg>
<svg style="left:138.8px;top:521.2px" width="18" height="18" viewBox="-9 -9 18 18"><g transform="scale(0.87)"><path d="M-2.6 6.4C-4.6 3.6 -6.4 1.4 -6.6 -0.4C-5.4 -1 -4.4 0 -3.6 1.2V-4.4C-3.6 -5.8 -1.8 -5.8 -1.8 -4.4V-5.6C-1.8 -7 0 -7 0 -5.6V-5C0 -6.4 1.8 -6.4 1.8 -5V-3.8C1.8 -5 3.6 -5 3.6 -3.8V2.2C3.6 4 3 5.2 2.4 6.4Z" fill="#dadada"/></g><path d="M7.6 5.6V7.6H5.6Z" fill="#c8c8c8"/></svg>
<svg style="left:115.3px;top:539.3px" width="18" height="18" viewBox="-9 -9 18 18"><g transform="scale(0.87)"><circle cx="-1.4" cy="-1.8" r="4.3" fill="none" stroke="#dadada" stroke-width="1.2"/><path d="M1.6 1.4L6 6" fill="none" stroke="#dadada" stroke-width="1.2" stroke-width="1.8"/><path d="M-3.8 -2.4A2.6 2.6 0 0 1 -1.6 -4.2" fill="none" stroke="#dadada" stroke-width="1.2" stroke-width="0.8"/></g></svg>
<svg style="left:138.8px;top:539.3px" width="18" height="18" viewBox="-9 -9 18 18"><g transform="scale(0.87)"><circle cx="-4.4" cy="1.4" r="1.35" fill="#dadada"/><circle cx="0" cy="1.4" r="1.35" fill="#dadada"/><circle cx="4.4" cy="1.4" r="1.35" fill="#dadada"/></g><path d="M7.6 5.6V7.6H5.6Z" fill="#c8c8c8"/></svg>
<div style="position:absolute;left:133.6px;top:575px;width:17.4px;height:17.4px;background:#e9161d;border:1px solid #f0c8c8;"></div>
<div style="position:absolute;left:122.4px;top:563.4px;width:18px;height:17.6px;background:#27272a;border:1px solid #c4c4c4;"></div>
<svg style="left:144px;top:562px" width="9" height="9" viewBox="144 562 9 9"><path d="M146.4 564.2H150.4V568.6" fill="none" stroke="#d6d6d6" stroke-width="1.1"/><path d="M144.8 564.2L147 562.6V565.8ZM150.4 570.4L148.8 568.2H152Z" fill="#d6d6d6"/></svg>
<div style="position:absolute;left:125.4px;top:589.6px;width:4.6px;height:4.6px;background:#e8e8e8;"></div>
<div style="position:absolute;left:122.8px;top:587.2px;width:4.6px;height:4.6px;background:#0c0c0c;border:0.8px solid #e0e0e0;"></div>
<svg style="left:117px;top:600px" width="38" height="14" viewBox="117 600 38 14"><rect x="118.6" y="602.2" width="11.4" height="9" fill="none" stroke="#d8d8d8" stroke-width="1.1"/><circle cx="124.3" cy="606.7" r="2.9" fill="none" stroke="#cfcfcf" stroke-width="0.9" stroke-dasharray="1.3 0.9"/><rect x="144.8" y="602" width="8.6" height="6.4" fill="#535353" stroke="#d8d8d8" stroke-width="1.1"/><rect x="141.6" y="604.8" width="8.6" height="6.4" fill="#535353" stroke="#d8d8d8" stroke-width="1.1"/><path d="M154.6 611.6V613H153.2Z" fill="#c8c8c8"/></svg>
<div style="position:absolute;left:196.6px;top:367.6px;width:196px;height:291px;background:linear-gradient(90deg,#d8d5cc 0,#dcd9d0 18%,#e0ddd5 55%,#deddd4 100%);"></div>
<div style="position:absolute;left:196.6px;top:367.6px;width:196px;height:291px;background:linear-gradient(180deg,rgba(0,0,0,.04) 0,rgba(0,0,0,0) 20%,rgba(0,0,0,0) 80%,rgba(60,55,30,.05) 100%);"></div>
<svg style="left:196.6px;top:630px" width="194" height="29" viewBox="196.6 630 194 29"><path d="M196.6 633.4L300 634.6L392 639V658.4H196.6Z" fill="#d3cfc5"/><path d="M196.6 633.4L300 634.6L392 639" fill="none" stroke="#c9c5ba" stroke-width="0.8"/><path d="M250 658.4L392 651.6V658.4Z" fill="#dcd9cd"/><path d="M197 367.6V658.4" stroke="#e6e4d8" stroke-width="0.9"/></svg>
<svg style="left:196px;top:367px" width="200" height="292" viewBox="196 367 200 292">
<defs>
<pattern id="ht" width="1.1" height="1.1" patternUnits="userSpaceOnUse" patternTransform="rotate(22)"><rect width="1.1" height="1.1" fill="#d4d3d0"/><circle cx="0.4" cy="0.4" r="0.34" fill="#727272"/></pattern>
<filter id="sh" x="-10%" y="-10%" width="125%" height="125%"><feDropShadow dx="-0.8" dy="1" stdDeviation="0.9" flood-color="#5a5648" flood-opacity=".45"/></filter>
</defs>
<path d="M270.4 367.6H276.2L270.4 385L265 384.4Z" fill="#66a04c"/>
<g filter="url(#sh)">
<!-- black back arm -->
<path d="M342.5 435.4L375.5 453.4L381.6 456.6L375.6 488.8L372.8 489.8L373.8 494.8L367.8 501.6L361.6 500.4L364.8 492.6L364 488.6L367.8 477.2L371.6 461.8L367.6 458.8L350.2 448.2Z" fill="#1d1c1c"/>
<!-- back leg -->
<path d="M369 523L375 520.6L388 544.2L389.8 570.4L385.6 572.6L373.8 558.4L365 545.4L366 533.6Z" fill="#1b1a1a"/>
<!-- head -->
<path d="M313.3 407.2L317.2 400.4L326.9 397.1L335.7 399L340.9 405.3L342.1 413L339.6 421.8L333.7 426.6L331.8 430.9L322.1 434.4L320.1 429.6L314.9 426.3L313.7 420.8L311 418.9L312.9 413Z" fill="url(#ht)"/>
<!-- torso -->
<path d="M328.9 435.4L321.1 442.2L317.2 453.9L317.2 465.5L321.1 479.1L326.9 488.8L331.8 496.6L340.5 504.4L358 498.6L354.1 485L350.3 471.4L348.3 457.7L344.4 442.2L338.6 435.4Z" fill="url(#ht)"/>
<!-- hip -->
<path d="M338.4 504.2L370.3 503L373.8 511.2L372.6 523L365.5 531.3L356.1 533.7L343.1 532.5L341.5 518.3Z" fill="url(#ht)"/>
<!-- thigh -->
<path d="M343.1 534.9L365.5 534.9L363.2 546.7L354.9 560.8L350.2 569.1L334.9 566.7L338.4 551.4Z" fill="url(#ht)"/>
<!-- shin -->
<path d="M333.7 577.3L350.2 571.4L358.5 584.4L360.8 596.2L364.4 612.8L365.5 624.6L356.1 625.7L351.4 615.1L340.8 593.9Z" fill="url(#ht)"/>
<!-- foot -->
<path d="M336 639.2L357.3 629.3L370.3 627.4L373.1 634L371.4 641.1L337.2 641.1Z" fill="url(#ht)"/>
</g>
<!-- seams / stripes -->
<g stroke="#3c3c3c" stroke-width="1" fill="none">
<path d="M313.6 406.8L340.6 407.6" stroke-width="1.3"/>
<path d="M321 433L333 425.6" stroke="#ecebe6" stroke-width="1.6"/>
<path d="M317.6 463.6L332 458.4M345 452L349 450.6" stroke-width="0.9"/>
<path d="M327 488.6L333 486.8" stroke-width="1.6"/>
<path d="M338 484L356 477.6M341 492.6L356.6 489" stroke-width="0.8"/>
<path d="M341.2 516.6L372.6 516.8" stroke-width="1.1"/>
<path d="M344 533.8L364 533.4" stroke="#efeee9" stroke-width="1.6"/>
<path d="M341.2 543.6L362 548.2" stroke-width="0.8"/>
<path d="M335.6 566.6L349.8 568.8" stroke-width="1.2"/>
<path d="M338 588L353 580" stroke-width="0.7"/>
<path d="M342.8 598.8L360.4 594.2" stroke-width="1.3"/>
<path d="M349.8 612L363 608" stroke-width="0.7"/>
<path d="M356.2 625.6L365.4 624" stroke-width="1.3"/>
<path d="M337.4 640.6L371.4 640.6" stroke-width="0.9"/>
</g>
<!-- front arm (dark with highlights) -->
<g filter="url(#sh)">
<path d="M327.9 438.3L338.6 437.3L348.3 469.4L345.4 473.3L340.9 472.3L331.8 453.9Z" fill="#3f3f3f"/>
<path d="M340.9 472.3L348.3 471.4L346.4 481.1L335.7 498.6L328.9 501.5L326.9 496.6L336.6 483Z" fill="#484848"/>
<path d="M306.5 511.2L311.2 501.2L325.4 497.6L333.7 501.6L328.4 507.7L316 513.6L308.9 514.8Z" fill="#5a5a5a"/>
</g>
<g stroke="#cfcec8" stroke-width="0.8" fill="none">
<path d="M330.4 440L341.6 470.4M333.6 439.4L344.6 470M336.6 438.6L346.8 468.6"/>
<path d="M342 474.6L329.4 499M345.4 473.6L333 497.4"/>
<path d="M309 509.6L324.4 502.2M311.6 512.6L327.6 505.2M312.6 503.6L324.6 499.8" stroke="#e4e3de"/>
<circle cx="345" cy="471.8" r="2.1" stroke="#f2f2ee" stroke-width="1.1"/>
</g>
</svg>
<div style="position:absolute;left:390.0px;top:303.8px;width:568.0px;height:393.0px;background:#545454;box-shadow:0 0 3px rgba(0,0,0,.45);"></div>
<div style="position:absolute;left:390.0px;top:303.8px;width:568.0px;height:20.0px;background:#ffffff;"></div>
<div class="t" style="left:395.0px;top:309.5px;font-size:10px;color:#111;transform:scaleX(0.823);">Adobe PDF speichern</div>
<svg style="left:942px;top:310px" width="9" height="9" viewBox="0 0 9 9"><path d="M1 1L7.4 7.4M7.4 1L1 7.4" stroke="#111" stroke-width="0.9"/></svg>
<div class="t" style="left:401.0px;top:332.4px;font-size:10.5px;color:#e4e4e4;transform:scaleX(0.842);">Adobe PDF-Vorgabe:</div>
<div style="position:absolute;left:484.5px;top:329.8px;width:466px;height:16px;background:#3d3d3d;border:1px solid #3e6196;border-top:2.2px solid #3b5f92;"></div>
<div class="t" style="left:490.0px;top:333.1px;font-size:10.5px;color:#e4e4e4;transform:scaleX(0.832);">[Qualitativ hochwertiger Druck]</div>
<div class="t" style="left:441.8px;top:352.4px;font-size:10.5px;color:#e4e4e4;transform:scaleX(0.878);">Standard:</div>
<div style="position:absolute;left:398.3px;top:376.2px;width:120px;height:284px;background:#535353;border:1px solid #646464;"></div>
<div style="position:absolute;left:398.8px;top:376.8px;width:119.0px;height:13.8px;background:#6c6c6c;"></div>
<div class="t" style="left:402.0px;top:378.4px;font-size:10.5px;color:#eeeeee;transform:scaleX(0.802);">Allgemein</div>
<div class="t" style="left:402.0px;top:394.0px;font-size:10.5px;color:#eeeeee;transform:scaleX(0.787);">Komprimierung</div>
<div class="t" style="left:402.0px;top:409.6px;font-size:10.5px;color:#eeeeee;transform:scaleX(0.772);">Ausgabe</div>
<div class="t" style="left:402.0px;top:425.2px;font-size:10.5px;color:#eeeeee;transform:scaleX(0.792);">Sicherheit</div>
<div class="t" style="left:402.0px;top:440.8px;font-size:10.5px;color:#eeeeee;transform:scaleX(0.800);">Übersicht</div>
<div style="position:absolute;left:398.5px;top:672px;width:90px;height:16.2px;background:#474747;border:1px solid #626262;border-radius:1.5px;"></div>
<div class="t" style="left:407.8px;top:675.0px;font-size:10.5px;color:#eeeeee;transform:scaleX(0.810);">Vorgabe speichern...</div>
</div></div>
<!-- ===== laptop 2 (Skype) ===== -->
<div style="position:absolute;left:447.2px;top:335.4px;width:797.6px;height:500px;border-radius:26px;background:#0e0f10;box-shadow:inset 0 0 0 1.2px #d0d0d0,inset 0 0 0 2.7px #adadad,inset 0 0 0 3.6px #707070,inset 0 0 0 4.3px #2c2d2f;"></div>
<div style="position:absolute;left:844.5px;top:354.5px;width:3.2px;height:3.2px;border-radius:50%;background:#2a2a2e;"></div>
<div id="sk" style="position:absolute;left:466px;top:367.5px;width:759px;height:360px;overflow:hidden;background:#050506;">
<div class="pg" style="left:-466px;top:-367.5px;">
<div style="position:absolute;left:466.0px;top:367.5px;width:759.0px;height:17.6px;background:#ffffff;"></div>
<svg style="left:468px;top:370px" width="12" height="12" viewBox="468 370 12 12"><rect x="470" y="371.8" width="8.8" height="9" rx="4.2" fill="#12a5ea"/><path d="M476.4 374.6C475.9 373.8 475 373.6 474.2 373.7C473.2 373.8 472.6 374.4 472.7 375.1C472.9 376.5 476.2 375.9 476.4 377.4C476.5 378.3 475.6 378.9 474.5 378.9C473.5 378.9 472.7 378.5 472.4 377.8" fill="none" stroke="#fff" stroke-width="1.1" stroke-linecap="round"/></svg>
<div class="t" style="left:480.8px;top:372.6px;font-size:8.5px;color:#1a1a1a;transform:scaleX(0.796);">Skype</div>
<div style="position:absolute;left:1154.6px;top:376.3px;width:6.6px;height:1.1px;background:#222;"></div>
<div style="position:absolute;left:1182.2px;top:373.2px;width:6.8px;height:6.8px;border:1.1px solid #222;"></div>
<svg style="left:1209px;top:373px" width="8" height="8" viewBox="0 0 8 8"><path d="M0.6 0.6L7.2 7.2M7.2 0.6L0.6 7.2" stroke="#222" stroke-width="1.1"/></svg>
<div style="position:absolute;left:586.8px;top:385px;width:522px;height:293.4px;background:radial-gradient(ellipse 60px 100px at 505px 210px,rgba(27,60,124,.85) 0,rgba(22,48,104,.45) 50%,rgba(14,26,60,0) 100%),linear-gradient(180deg,#0f1b40 0,#0d1a42 55%,#0b1330 85%,#0a1026 100%);"></div>
<div style="position:absolute;left:586.8px;top:662.0px;width:522.0px;height:16.4px;background:#0b0f1d;"></div>
<svg style="left:588px;top:663px" width="100" height="15" viewBox="588 663 100 15">
<path d="M590.6 667.8L593.4 667.4V670.2H590.6ZM594 667.3L597.4 666.8V670.2H594ZM590.6 670.8H593.4V673.6L590.6 673.2ZM594 670.8H597.4V674.2L594 673.7Z" fill="#fff"/>
<circle cx="614.8" cy="669" r="2.3" fill="none" stroke="#fff" stroke-width="1"/><path d="M613.2 670.8L610.6 673.6" stroke="#fff" stroke-width="1.1"/>
<rect x="631.2" y="667.8" width="4.8" height="5.2" fill="none" stroke="#fff" stroke-width="0.9"/><path d="M629.6 668.6V672.2M637.6 668.6V672.2" stroke="#fff" stroke-width="0.9"/><path d="M636 670.4H637.6" stroke="#fff" stroke-width="0.7"/>
<circle cx="654.6" cy="670.6" r="3.3" fill="none" stroke="#3fb4ee" stroke-width="1.7"/><path d="M652 670.6H657.6" stroke="#3fb4ee" stroke-width="1.2"/><path d="M650.4 673.6C649.6 669 655.6 665.2 659 666.4" fill="none" stroke="#e8c54a" stroke-width="0.9"/>
<circle cx="673.4" cy="670.4" r="3.8" fill="#f2772a"/><circle cx="674" cy="670.8" r="2" fill="#7a3fb8"/><path d="M669.8 668.4C671 666.4 674.4 666 676.6 668" fill="none" stroke="#ffc03a" stroke-width="1.2"/>
</svg>
<div style="position:absolute;left:666.0px;top:677.6px;width:11.0px;height:0.9px;background:#8cc8f0;"></div>
<svg style="left:1096px;top:666px" width="8" height="8" viewBox="0 0 8 8"><path d="M1 1H7V5.4H4.6L3 7V5.4H1Z" fill="none" stroke="#e8e8e8" stroke-width="0.8"/></svg>
<div class="t" style="left:1104.6px;top:625.5px;font-size:5px;color:#d8d8e8;">o</div>
<svg style="left:1074px;top:387px" width="20" height="18" viewBox="1074 387 20 18"><path d="M1078.4 388.4H1090.6L1091.6 393H1077.4Z" fill="#e9e9e9"/><rect x="1076.4" y="392.6" width="16" height="7.6" rx="0.8" fill="#f4f4f4"/><rect x="1076.4" y="397" width="16" height="3.2" fill="#c9c9c9"/><rect x="1079" y="394.6" width="7" height="1" fill="#9a9a9a"/><rect x="1075.6" y="398.6" width="4" height="4" fill="#fff" stroke="#5a7bc8" stroke-width="0.5"/><path d="M1076.6 401.6L1078.6 399.6M1077.4 399.6H1078.6V400.8" stroke="#2a5bd0" stroke-width="0.6" fill="none"/></svg>
<div class="t" style="left:1064.4px;top:407.0px;font-size:5.3px;color:#f2f2f2;transform:scaleX(0.906);">HP ColorLaserJet</div>
<div class="t" style="left:1064.8px;top:413.4px;font-size:5.3px;color:#f2f2f2;transform:scaleX(0.906);">MFP M278-M281</div>
<div class="t" style="left:1086.0px;top:450.8px;font-size:5.3px;color:#f2f2f2;transform:scaleX(0.905);">LaserJet</div>
<div class="t" style="left:1087.6px;top:457.4px;font-size:5.3px;color:#f2f2f2;transform:scaleX(0.813);">M281 -...</div>
<svg style="left:1090px;top:438px" width="8" height="10" viewBox="0 0 8 10"><rect x="0" y="2" width="7" height="6" fill="#e0e0e0"/><rect x="1" y="0" width="5" height="3" fill="#f4f4f4"/></svg>
<div style="position:absolute;left:586.8px;top:385.4px;width:414.4px;height:257.8px;background:#ffffff;border:0.6px solid #9aa6c0;"></div>
<svg style="left:588.6px;top:387.4px" width="5" height="6" viewBox="0 0 5 6"><path d="M1.6 0H3.4V2.8H4.8L2.5 5.4L0.2 2.8H1.6Z" fill="#1f6fd6"/></svg>
<div style="position:absolute;left:595.4px;top:388.0px;width:0.6px;height:5.4px;background:#bdbdbd;"></div>
<div style="position:absolute;left:601.6px;top:388.2px;width:3.4px;height:4.6px;background:#fbfbfb;border:0.6px solid #b9b9b9;"></div>
<div style="position:absolute;left:602.4px;top:390.0px;width:1.8px;height:1.4px;background:#d9534f;"></div>
<div style="position:absolute;left:611.2px;top:388.4px;width:3.2px;height:4.6px;background:#f2c54c;border-radius:0.6px;"></div>
<div style="position:absolute;left:621.0px;top:390.6px;width:1.4px;height:1.2px;background:#444;"></div>
<div style="position:absolute;left:627.0px;top:388.0px;width:0.6px;height:5.4px;background:#9a9a9a;"></div>
<div style="position:absolute;left:686.2px;top:386.6px;width:28.0px;height:8.8px;background:#f7ea5a;"></div>
<div class="t" style="left:691.4px;top:389.0px;font-size:5.3px;color:#5a5520;transform:scaleX(0.756);">Verwalten</div>
<div class="t" style="left:716.8px;top:388.6px;font-size:5.3px;color:#b4b4b4;transform:scaleX(0.904);">D:\Users\Alexander\Downloads</div>
<div style="position:absolute;left:951.8px;top:390.4px;width:4.2px;height:0.7px;background:#b0b0b0;"></div>
<div style="position:absolute;left:969.7px;top:388.2px;width:4.4px;height:4.4px;border:0.7px solid #b0b0b0;"></div>
<svg style="left:988.7px;top:388.1px" width="4.8" height="4.8" viewBox="0 0 4.8 4.8"><path d="M0.3 0.3L4.5 4.5M4.5 0.3L0.3 4.5" stroke="#b0b0b0" stroke-width="0.7"/></svg>
<div style="position:absolute;left:587.0px;top:396.4px;width:10.0px;height:10.0px;background:#1e62b4;"></div>
<div class="t" style="left:592.6px;top:398.8px;font-size:5.3px;color:#fff;transform:scaleX(0.888);">D</div>
<div style="position:absolute;left:587.4px;top:406.6px;width:9.4px;height:236.0px;background:#fcfcfc;"></div>
<div class="t" style="left:593.6px;top:411.1px;font-size:5px;color:#c8c8c8;">‹</div>
<div class="t" style="left:592.2px;top:627.0px;font-size:5.3px;color:#7a7a7a;transform:scaleX(0.712);">14</div>
<div style="position:absolute;left:587.2px;top:634.6px;width:10.0px;height:8.2px;background:#f0f0f0;"></div>
<div class="t" style="left:587.8px;top:636.8px;font-size:5.3px;color:#222;transform:scaleX(0.789);">14 E</div>
<div style="position:absolute;left:596.8px;top:396.6px;width:413.8px;height:256.4px;background:#ffffff;border:0.6px solid #aab4cc;"></div>
<div style="position:absolute;left:599.4px;top:398.6px;width:3.2px;height:4.6px;background:#f2c54c;border-radius:0.6px;"></div>
<div style="position:absolute;left:605.0px;top:398.4px;width:0.6px;height:5.2px;background:#c8c8c8;"></div>
<div style="position:absolute;left:608.4px;top:398.6px;width:3.4px;height:4.6px;background:#fbfbfb;border:0.6px solid #b9b9b9;"></div>
<div style="position:absolute;left:609.2px;top:400.4px;width:1.8px;height:1.4px;background:#d9534f;"></div>
<div style="position:absolute;left:617.0px;top:398.6px;width:3.2px;height:4.6px;background:#f2c54c;border-radius:0.6px;"></div>
<div style="position:absolute;left:623.8px;top:400.8px;width:1.4px;height:1.2px;background:#444;"></div>
<div style="position:absolute;left:628.0px;top:398.4px;width:0.6px;height:5.2px;background:#9a9a9a;"></div>
<div class="t" style="left:640.4px;top:398.6px;font-size:5.3px;color:#b0b0b0;transform:scaleX(0.804);">E:\HPSCANS</div>
<div style="position:absolute;left:961.3px;top:400.8px;width:4.2px;height:0.7px;background:#b0b0b0;"></div>
<div style="position:absolute;left:980.1px;top:398.6px;width:4.4px;height:4.4px;border:0.7px solid #b0b0b0;"></div>
<svg style="left:998.9px;top:398.5px" width="4.8" height="4.8" viewBox="0 0 4.8 4.8"><path d="M0.3 0.3L4.5 4.5M4.5 0.3L0.3 4.5" stroke="#b0b0b0" stroke-width="0.7"/></svg>
<div style="position:absolute;left:597.2px;top:406.8px;width:23.2px;height:9.4px;background:#1e62b4;"></div>
<div class="t" style="left:603.2px;top:409.1px;font-size:5.3px;color:#f4f8ff;transform:scaleX(0.857);">Datei</div>
<div class="t" style="left:625.6px;top:409.1px;font-size:5.3px;color:#5a5a5a;transform:scaleX(0.858);">Start</div>
<div class="t" style="left:646.0px;top:409.1px;font-size:5.3px;color:#5a5a5a;transform:scaleX(0.796);">Freigeben</div>
<div class="t" style="left:676.0px;top:409.1px;font-size:5.3px;color:#5a5a5a;transform:scaleX(0.817);">Ansicht</div>
<svg style="left:995.2px;top:410.0px" width="3.4" height="2.6" viewBox="0 0 3.4 2.6"><path d="M0.3 0.4L1.7 2L3.1 0.4" fill="none" stroke="#777" stroke-width="0.7"/></svg>
<div style="position:absolute;left:1003.6px;top:408.6px;width:5.2px;height:5.2px;border-radius:50%;background:#1c6fd0;"></div><div class="t" style="left:1005.1px;top:409.2px;font-size:4.2px;color:#fff;font-weight:bold;">?</div>
<div style="position:absolute;left:597.2px;top:416.4px;width:413.0px;height:0.7px;background:#e3e3e3;"></div>
<svg style="left:602.5px;top:421.6px" width="5" height="4" viewBox="0 0 5 4"><path d="M4.6 2H0.6M2.2 0.4L0.6 2L2.2 3.6" fill="none" stroke="#333" stroke-width="0.75"/></svg>
<svg style="left:614.1px;top:421.6px" width="5" height="4" viewBox="0 0 5 4"><path d="M0.4 2H4.4M2.8 0.4L4.4 2L2.8 3.6" fill="none" stroke="#c4c4c4" stroke-width="0.75"/></svg>
<svg style="left:624.4px;top:422.6px" width="3" height="2.6" viewBox="0 0 3.4 2.6"><path d="M0.3 0.4L1.7 2L3.1 0.4" fill="none" stroke="#888" stroke-width="0.7"/></svg>
<svg style="left:632.3px;top:421.4px" width="5" height="4" viewBox="0 0 5 4"><path d="M2.5 4V0.5M0.9 2.1L2.5 0.5L4.1 2.1" fill="none" stroke="#555" stroke-width="0.75"/></svg>
<div style="position:absolute;left:639.4px;top:418.6px;width:318.6px;height:9.8px;border:0.6px solid #dcdcdc;background:#fff;"></div>
<div style="position:absolute;left:642.0px;top:421.0px;width:3.2px;height:4.6px;background:#f2c54c;border-radius:0.6px;"></div>
<div class="t" style="left:649.6px;top:420.9px;font-size:5.4px;color:#444;">›</div>
<div class="t" style="left:655.0px;top:421.0px;font-size:5.3px;color:#1e1e1e;transform:scaleX(0.869);">USB-Laufwerk (E:)</div>
<div class="t" style="left:695.6px;top:420.9px;font-size:5.4px;color:#444;">›</div>
<div class="t" style="left:700.8px;top:421.0px;font-size:5.3px;color:#1e1e1e;transform:scaleX(0.835);">HPSCANS</div>
<svg style="left:952.4px;top:422.6px" width="3.4" height="2.6" viewBox="0 0 3.4 2.6"><path d="M0.3 0.4L1.7 2L3.1 0.4" fill="none" stroke="#444" stroke-width="0.7"/></svg>
<svg style="left:959.1px;top:421.1px" width="5" height="5" viewBox="0 0 5 5"><path d="M4.1 2.6A1.7 1.7 0 1 1 3.2 1.1" fill="none" stroke="#444" stroke-width="0.7"/><path d="M2.6 0.2H4.2V1.8Z" fill="#444"/></svg>
<div style="position:absolute;left:966px;top:418.6px;width:42.4px;height:9.8px;border:0.6px solid #dcdcdc;background:#fff;"></div>
<div class="t" style="left:970.0px;top:421.2px;font-size:5.3px;color:#8a8a8a;transform:scaleX(0.822);">&quot;HPSCANS&quot;...</div>
<svg style="left:1000.9px;top:421.1px" width="5" height="5" viewBox="0 0 5 5"><circle cx="3" cy="1.9" r="1.4" fill="none" stroke="#333" stroke-width="0.7"/><path d="M2 2.9L0.5 4.5" stroke="#333" stroke-width="0.8"/></svg>
<div style="position:absolute;left:597.2px;top:624.4px;width:79.8px;height:9.4px;background:#d9d9d9;"></div>
<div style="position:absolute;left:613.8px;top:441.5px;width:4.2px;height:3.6px;background:#3a8ee6;border-radius:0.5px;"></div>
<div class="t" style="left:621.0px;top:440.7px;font-size:5.3px;color:#2a2a2a;transform:scaleX(0.900);">Desktop</div>
<div style="position:absolute;left:613.8px;top:451.3px;width:4.2px;height:3.6px;background:#cfd8e4;border-radius:0.5px;"></div>
<div class="t" style="left:621.0px;top:450.5px;font-size:5.3px;color:#2a2a2a;transform:scaleX(0.900);">Dokumente</div>
<div style="position:absolute;left:613.8px;top:461.1px;width:4.2px;height:3.6px;background:#1f6fd6;border-radius:0.5px;"></div>
<div class="t" style="left:621.0px;top:460.2px;font-size:5.3px;color:#2a2a2a;transform:scaleX(0.900);">Downloads</div>
<div style="position:absolute;left:613.8px;top:470.8px;width:4.2px;height:3.6px;background:#2d6fd2;border-radius:0.5px;"></div>
<div class="t" style="left:621.0px;top:470.0px;font-size:5.3px;color:#2a2a2a;transform:scaleX(0.900);">Musik</div>
<div style="position:absolute;left:613.8px;top:480.6px;width:4.2px;height:3.6px;background:#555a66;border-radius:0.5px;"></div>
<div class="t" style="left:621.0px;top:479.8px;font-size:5.3px;color:#2a2a2a;transform:scaleX(0.900);">Videos</div>
<div style="position:absolute;left:613.8px;top:490.4px;width:4.2px;height:3.6px;background:#7a8aa0;border-radius:0.5px;"></div>
<div class="t" style="left:621.0px;top:489.6px;font-size:5.3px;color:#2a2a2a;transform:scaleX(0.900);">Lokaler Datenträger (C:)</div>
<div style="position:absolute;left:613.8px;top:500.2px;width:4.2px;height:3.6px;background:#8a8a8a;border-radius:0.5px;"></div>
<div class="t" style="left:621.0px;top:499.4px;font-size:5.3px;color:#2a2a2a;transform:scaleX(0.900);">Volume (D:)</div>
<div style="position:absolute;left:613.8px;top:510.0px;width:4.2px;height:3.6px;background:#8a8a8a;border-radius:0.5px;"></div>
<div class="t" style="left:621.0px;top:509.2px;font-size:5.3px;color:#2a2a2a;transform:scaleX(0.900);">USB-Laufwerk (E:)</div>
<div style="position:absolute;left:613.8px;top:519.8px;width:4.2px;height:3.6px;background:#d04a4a;border-radius:0.5px;"></div>
<div class="t" style="left:621.0px;top:519.0px;font-size:5.3px;color:#2a2a2a;transform:scaleX(0.900);">transfer (\\techred01) (S:)</div>
<div style="position:absolute;left:610.6px;top:529.6px;width:4.2px;height:3.6px;background:#d8b34a;border-radius:0.5px;"></div>
<div class="t" style="left:617.8px;top:528.8px;font-size:5.3px;color:#2a2a2a;transform:scaleX(0.900);">Bibliotheken</div>
<div style="position:absolute;left:610.6px;top:539.4px;width:4.2px;height:3.6px;background:#8a8a8a;border-radius:0.5px;"></div>
<div class="t" style="left:617.8px;top:538.6px;font-size:5.3px;color:#2a2a2a;transform:scaleX(0.900);">USB-Laufwerk (E:)</div>
<div style="position:absolute;left:614.8px;top:548.6px;width:3.2px;height:4.6px;background:#f2c54c;border-radius:0.6px;"></div>
<div class="t" style="left:621.0px;top:548.4px;font-size:5.3px;color:#2a2a2a;transform:scaleX(0.900);">Adrian</div>
<div style="position:absolute;left:614.8px;top:558.4px;width:3.2px;height:4.6px;background:#f2c54c;border-radius:0.6px;"></div>
<div class="t" style="left:621.0px;top:558.1px;font-size:5.3px;color:#2a2a2a;transform:scaleX(0.900);">Amy Winehouse</div>
<div style="position:absolute;left:614.8px;top:568.2px;width:3.2px;height:4.6px;background:#f2c54c;border-radius:0.6px;"></div>
<div class="t" style="left:621.0px;top:568.0px;font-size:5.3px;color:#2a2a2a;transform:scaleX(0.900);">Balkan Beat Box</div>
<div style="position:absolute;left:614.8px;top:578.0px;width:3.2px;height:4.6px;background:#f2c54c;border-radius:0.6px;"></div>
<div class="t" style="left:621.0px;top:577.8px;font-size:5.3px;color:#2a2a2a;transform:scaleX(0.900);">Cake</div>
<div style="position:absolute;left:614.8px;top:587.7px;width:3.2px;height:4.6px;background:#f2c54c;border-radius:0.6px;"></div>
<div class="t" style="left:621.0px;top:587.5px;font-size:5.3px;color:#2a2a2a;transform:scaleX(0.900);">Duffy</div>
<div style="position:absolute;left:614.8px;top:597.5px;width:3.2px;height:4.6px;background:#f2c54c;border-radius:0.6px;"></div>
<div class="t" style="left:621.0px;top:597.2px;font-size:5.3px;color:#2a2a2a;transform:scaleX(0.900);">Frankofonie</div>
<div style="position:absolute;left:614.8px;top:607.2px;width:3.2px;height:4.6px;background:#f2c54c;border-radius:0.6px;"></div>
<div class="t" style="left:621.0px;top:607.0px;font-size:5.3px;color:#2a2a2a;transform:scaleX(0.900);">Goran Bregovic</div>
<div style="position:absolute;left:614.8px;top:617.0px;width:3.2px;height:4.6px;background:#f2c54c;border-radius:0.6px;"></div>
<div class="t" style="left:621.0px;top:616.8px;font-size:5.3px;color:#2a2a2a;transform:scaleX(0.900);">Heike Makatsch &amp; Steve B</div>
<div style="position:absolute;left:614.8px;top:626.8px;width:3.2px;height:4.6px;background:#f2c54c;border-radius:0.6px;"></div>
<div class="t" style="left:621.0px;top:626.6px;font-size:5.3px;color:#2a2a2a;transform:scaleX(0.900);">HPSCANS</div>
<div class="t" style="left:602.8px;top:637.4px;font-size:5.3px;color:#8a8a8a;transform:scaleX(0.914);">26 Elemente</div>
<div style="position:absolute;left:597.2px;top:644.4px;width:413.0px;height:8.2px;background:#f0f0f0;"></div>
<div class="t" style="left:598.0px;top:646.0px;font-size:5.3px;color:#1e1e1e;transform:scaleX(0.928);">26 Elemente (Freier Speicherplatz: 67,4 GB)</div>
<div style="position:absolute;left:676.8px;top:430.6px;width:414.8px;height:247.6px;background:#ffffff;border:0.6px solid #9fb0d0;box-shadow:0 0 2px rgba(0,0,0,.3);"></div>
<div style="position:absolute;left:679.4px;top:433.6px;width:3.2px;height:4.6px;background:#f2c54c;border-radius:0.6px;"></div>
<div style="position:absolute;left:685.0px;top:433.4px;width:0.6px;height:5.2px;background:#c8c8c8;"></div>
<div style="position:absolute;left:688.4px;top:433.6px;width:3.4px;height:4.6px;background:#fbfbfb;border:0.6px solid #b9b9b9;"></div>
<div style="position:absolute;left:689.2px;top:435.4px;width:1.8px;height:1.4px;background:#d9534f;"></div>
<div style="position:absolute;left:697.0px;top:433.6px;width:3.2px;height:4.6px;background:#f2c54c;border-radius:0.6px;"></div>
<div style="position:absolute;left:703.8px;top:435.8px;width:1.4px;height:1.2px;background:#444;"></div>
<div style="position:absolute;left:708.0px;top:433.4px;width:0.6px;height:5.2px;background:#9a9a9a;"></div>
<div class="t" style="left:720.0px;top:433.6px;font-size:5.3px;color:#3a3a3a;transform:scaleX(0.910);">D:\Users\Alexander\Documents\a_Sem 2020_1\M_2_1_Figuratives Zeichnen 6.4\Themenpool</div>
<div style="position:absolute;left:1041.4px;top:435.6px;width:4.2px;height:0.7px;background:#4a4a4a;"></div>
<div style="position:absolute;left:1060.1px;top:433.4px;width:4.4px;height:4.4px;border:0.7px solid #4a4a4a;"></div>
<svg style="left:1078.9px;top:433.3px" width="4.8" height="4.8" viewBox="0 0 4.8 4.8"><path d="M0.3 0.3L4.5 4.5M4.5 0.3L0.3 4.5" stroke="#4a4a4a" stroke-width="0.7"/></svg>
<div style="position:absolute;left:677.2px;top:441.8px;width:23.2px;height:9.4px;background:#1e62b4;"></div>
<div class="t" style="left:683.2px;top:444.1px;font-size:5.3px;color:#f4f8ff;transform:scaleX(0.857);">Datei</div>
<div class="t" style="left:706.0px;top:444.1px;font-size:5.3px;color:#5a5a5a;transform:scaleX(0.858);">Start</div>
<div class="t" style="left:726.0px;top:444.1px;font-size:5.3px;color:#5a5a5a;transform:scaleX(0.796);">Freigeben</div>
<div class="t" style="left:756.2px;top:444.1px;font-size:5.3px;color:#5a5a5a;transform:scaleX(0.817);">Ansicht</div>
<svg style="left:1075.2px;top:445.2px" width="3.4" height="2.6" viewBox="0 0 3.4 2.6"><path d="M0.3 0.4L1.7 2L3.1 0.4" fill="none" stroke="#777" stroke-width="0.7"/></svg>
<div style="position:absolute;left:1083.6px;top:443.8px;width:5.2px;height:5.2px;border-radius:50%;background:#1c6fd0;"></div><div class="t" style="left:1085.1px;top:444.4px;font-size:4.2px;color:#fff;font-weight:bold;">?</div>
<div style="position:absolute;left:677.2px;top:451.4px;width:414.0px;height:0.7px;background:#e3e3e3;"></div>
<svg style="left:682.5px;top:456.4px" width="5" height="4" viewBox="0 0 5 4"><path d="M4.6 2H0.6M2.2 0.4L0.6 2L2.2 3.6" fill="none" stroke="#333" stroke-width="0.75"/></svg>
<svg style="left:694.3px;top:456.4px" width="5" height="4" viewBox="0 0 5 4"><path d="M0.4 2H4.4M2.8 0.4L4.4 2L2.8 3.6" fill="none" stroke="#333" stroke-width="0.75"/></svg>
<svg style="left:705.0px;top:457.4px" width="3" height="2.6" viewBox="0 0 3.4 2.6"><path d="M0.3 0.4L1.7 2L3.1 0.4" fill="none" stroke="#888" stroke-width="0.7"/></svg>
<svg style="left:712.5px;top:456.2px" width="5" height="4" viewBox="0 0 5 4"><path d="M2.5 4V0.5M0.9 2.1L2.5 0.5L4.1 2.1" fill="none" stroke="#555" stroke-width="0.75"/></svg>
<div style="position:absolute;left:720.6px;top:453.4px;width:318px;height:9.8px;border:0.6px solid #dcdcdc;background:#fff;"></div>
<div style="position:absolute;left:723.0px;top:455.8px;width:3.2px;height:4.6px;background:#f2c54c;border-radius:0.6px;"></div>
<div class="t" style="left:729.5px;top:455.7px;font-size:5.4px;color:#444;">›</div>
<div class="t" style="left:734.9px;top:455.8px;font-size:5.3px;color:#1e1e1e;transform:scaleX(0.951);">Kerstin Alexander</div>
<div class="t" style="left:775.6px;top:455.7px;font-size:5.4px;color:#444;">›</div>
<div class="t" style="left:781.0px;top:455.8px;font-size:5.3px;color:#1e1e1e;transform:scaleX(0.948);">Dokumente</div>
<div class="t" style="left:809.0px;top:455.7px;font-size:5.4px;color:#444;">›</div>
<div class="t" style="left:814.4px;top:455.8px;font-size:5.3px;color:#1e1e1e;transform:scaleX(0.865);">a_Sem 2020_1</div>
<div class="t" style="left:848.6px;top:455.7px;font-size:5.4px;color:#444;">›</div>
<div class="t" style="left:854.0px;top:455.8px;font-size:5.3px;color:#1e1e1e;transform:scaleX(0.890);">M_2_1_Figuratives Zeichnen 6.4</div>
<div class="t" style="left:925.3px;top:455.7px;font-size:5.4px;color:#444;">›</div>
<div class="t" style="left:930.7px;top:455.8px;font-size:5.3px;color:#1e1e1e;transform:scaleX(0.940);">Themenpool</div>
<div class="t" style="left:961.4px;top:455.7px;font-size:5.4px;color:#444;">›</div>
<svg style="left:1032.8px;top:457.4px" width="3.4" height="2.6" viewBox="0 0 3.4 2.6"><path d="M0.3 0.4L1.7 2L3.1 0.4" fill="none" stroke="#444" stroke-width="0.7"/></svg>
<svg style="left:1039.1px;top:455.9px" width="5" height="5" viewBox="0 0 5 5"><path d="M4.1 2.6A1.7 1.7 0 1 1 3.2 1.1" fill="none" stroke="#444" stroke-width="0.7"/><path d="M2.6 0.2H4.2V1.8Z" fill="#444"/></svg>
<div style="position:absolute;left:1046.4px;top:453.4px;width:42.6px;height:9.8px;border:0.6px solid #dcdcdc;background:#fff;"></div>
<div class="t" style="left:1050.0px;top:456.0px;font-size:5.3px;color:#8a8a8a;transform:scaleX(0.898);">&quot;Themenpo...</div>
<svg style="left:1080.9px;top:455.9px" width="5" height="5" viewBox="0 0 5 5"><circle cx="3" cy="1.9" r="1.4" fill="none" stroke="#333" stroke-width="0.7"/><path d="M2 2.9L0.5 4.5" stroke="#333" stroke-width="0.8"/></svg>
<div style="position:absolute;left:1007.6px;top:465.6px;width:7.4px;height:7.4px;background:#cfe3f7;border:0.5px solid #8fb8e6;"></div>
<div style="position:absolute;left:1009.0px;top:467.0px;width:2.0px;height:4.6px;background:#2f78d0;"></div>
<div style="position:absolute;left:1011.6px;top:467.0px;width:2.6px;height:4.6px;background:#fff;"></div>
<div style="position:absolute;left:1018.0px;top:467.0px;width:4.4px;height:5.0px;background:#f6d660;border-radius:0.5px;"></div>
<div style="position:absolute;left:1019.0px;top:466.2px;width:3.2px;height:2.0px;background:#fbeea0;"></div>
<div style="position:absolute;left:1027.0px;top:468.8px;width:1.6px;height:1.4px;background:#333;"></div>
<svg style="left:1032px;top:466px" width="58" height="7" viewBox="1032 466 58 7"><path d="M1033.4 466.6L1036.6 471.8M1036.6 466.6L1033.4 471.8" stroke="#6a8cc0" stroke-width="0.7"/><circle cx="1033.4" cy="472" r="0.8" fill="none" stroke="#5a7ab0" stroke-width="0.5"/><circle cx="1036.6" cy="472" r="0.8" fill="none" stroke="#5a7ab0" stroke-width="0.5"/><rect x="1041" y="467" width="2.8" height="3.8" fill="#dfe7f3" stroke="#9ab0d0" stroke-width="0.5"/><rect x="1042.4" y="468.4" width="2.8" height="3.8" fill="#eef2f9" stroke="#9ab0d0" stroke-width="0.5"/><rect x="1049.6" y="467" width="3.8" height="5.2" fill="#fdfdfd" stroke="#8a8a8a" stroke-width="0.6"/><rect x="1050.6" y="466.4" width="1.8" height="1.2" fill="#8a8a8a"/><path d="M1057.2 467L1062 472M1062 467L1057.2 472" stroke="#e02424" stroke-width="1.2"/><path d="M1064.8 469.8L1066.8 471.8L1071 467" fill="none" stroke="#f08020" stroke-width="1.1"/><rect x="1073.6" y="467.4" width="5" height="3.8" fill="#f4f6fa" stroke="#b8c4d8" stroke-width="0.5"/><path d="M1073.6 467.4L1076.1 469.6L1078.6 467.4" fill="none" stroke="#b8c4d8" stroke-width="0.5"/><rect x="1081" y="466.6" width="0.5" height="5.6" fill="#c8c8c8"/><circle cx="1086" cy="469.4" r="2.5" fill="#2f9a8a"/><path d="M1084.4 468.2C1085.6 467.4 1086.8 468.6 1087.6 468.2M1084.6 470.6C1085.6 470 1086.6 471 1087.6 470.6" stroke="#bfe6c8" stroke-width="0.6" fill="none"/></svg>
<div style="position:absolute;left:677.2px;top:597.6px;width:99.4px;height:9.4px;background:#d9d9d9;"></div>
<div style="position:absolute;left:687.2px;top:480.0px;width:4.2px;height:3.6px;background:#2a78d8;border-radius:0.5px;"></div>
<div class="t" style="left:694.4px;top:479.2px;font-size:5.3px;color:#2a2a2a;transform:scaleX(0.900);">Schnellzugriff</div>
<div style="position:absolute;left:691.6px;top:489.0px;width:3.2px;height:4.6px;background:#f2c54c;border-radius:0.6px;"></div>
<div class="t" style="left:697.8px;top:488.8px;font-size:5.3px;color:#2a2a2a;transform:scaleX(0.900);">Desktop</div>
<svg style="left:770.6px;top:489.4px" width="4" height="4" viewBox="0 0 4 4"><path d="M0.4 3.6L1.8 2.2M1.2 1.2L2.8 2.8M1.8 1.6L3 0.4L3.6 1L2.4 2.2" stroke="#6a6a6a" stroke-width="0.6" fill="none"/></svg>
<div style="position:absolute;left:690.6px;top:499.3px;width:4.2px;height:3.6px;background:#dde4ee;border-radius:0.5px;"></div>
<div class="t" style="left:697.8px;top:498.5px;font-size:5.3px;color:#2a2a2a;transform:scaleX(0.900);">Dokumente</div>
<svg style="left:770.6px;top:499.1px" width="4" height="4" viewBox="0 0 4 4"><path d="M0.4 3.6L1.8 2.2M1.2 1.2L2.8 2.8M1.8 1.6L3 0.4L3.6 1L2.4 2.2" stroke="#6a6a6a" stroke-width="0.6" fill="none"/></svg>
<div style="position:absolute;left:690.6px;top:509.0px;width:4.2px;height:3.6px;background:#1f6fd6;border-radius:0.5px;"></div>
<div class="t" style="left:697.8px;top:508.2px;font-size:5.3px;color:#2a2a2a;transform:scaleX(0.900);">Downloads</div>
<svg style="left:770.6px;top:508.8px" width="4" height="4" viewBox="0 0 4 4"><path d="M0.4 3.6L1.8 2.2M1.2 1.2L2.8 2.8M1.8 1.6L3 0.4L3.6 1L2.4 2.2" stroke="#6a6a6a" stroke-width="0.6" fill="none"/></svg>
<div style="position:absolute;left:690.6px;top:518.8px;width:4.2px;height:3.6px;background:#6f9fd8;border-radius:0.5px;"></div>
<div class="t" style="left:697.8px;top:518.0px;font-size:5.3px;color:#2a2a2a;transform:scaleX(0.900);">Bilder</div>
<svg style="left:770.6px;top:518.6px" width="4" height="4" viewBox="0 0 4 4"><path d="M0.4 3.6L1.8 2.2M1.2 1.2L2.8 2.8M1.8 1.6L3 0.4L3.6 1L2.4 2.2" stroke="#6a6a6a" stroke-width="0.6" fill="none"/></svg>
<div style="position:absolute;left:691.6px;top:528.2px;width:3.2px;height:4.6px;background:#f2c54c;border-radius:0.6px;"></div>
<div class="t" style="left:697.8px;top:528.0px;font-size:5.3px;color:#2a2a2a;transform:scaleX(0.900);">IDMM Odnungen</div>
<div style="position:absolute;left:691.6px;top:538.0px;width:3.2px;height:4.6px;background:#f2c54c;border-radius:0.6px;"></div>
<div class="t" style="left:697.8px;top:537.8px;font-size:5.3px;color:#2a2a2a;transform:scaleX(0.900);">Porträt</div>
<div style="position:absolute;left:691.6px;top:547.9px;width:3.2px;height:4.6px;background:#f2c54c;border-radius:0.6px;"></div>
<div class="t" style="left:697.8px;top:547.6px;font-size:5.3px;color:#2a2a2a;transform:scaleX(0.900);">Üb 3 Porträt zeichnen</div>
<div style="position:absolute;left:691.6px;top:557.7px;width:3.2px;height:4.6px;background:#f2c54c;border-radius:0.6px;"></div>
<div class="t" style="left:697.8px;top:557.5px;font-size:5.3px;color:#2a2a2a;transform:scaleX(0.900);">Üb 3a, 3b, 3c_Porträt zeichnen</div>
<div style="position:absolute;left:687.2px;top:571.5px;width:4.2px;height:3.6px;background:#2f8ae6;border-radius:0.5px;"></div>
<div class="t" style="left:694.4px;top:570.6px;font-size:5.3px;color:#2a2a2a;transform:scaleX(0.900);">Desktop</div>
<div style="position:absolute;left:690.6px;top:581.2px;width:4.2px;height:3.6px;background:#e8703a;border-radius:0.5px;"></div>
<div class="t" style="left:697.8px;top:580.4px;font-size:5.3px;color:#2a2a2a;transform:scaleX(0.900);">Creative Cloud Files</div>
<div style="position:absolute;left:690.6px;top:590.8px;width:4.2px;height:3.6px;background:#2a62d8;border-radius:0.5px;"></div>
<div class="t" style="left:697.8px;top:590.0px;font-size:5.3px;color:#2a2a2a;transform:scaleX(0.900);">Dropbox</div>
<div style="position:absolute;left:690.6px;top:600.5px;width:4.2px;height:3.6px;background:#c9a24a;border-radius:0.5px;"></div>
<div class="t" style="left:697.8px;top:599.6px;font-size:5.3px;color:#2a2a2a;transform:scaleX(0.900);">Kerstin Alexander</div>
<div style="position:absolute;left:690.6px;top:610.4px;width:4.2px;height:3.6px;background:#4aa0d8;border-radius:0.5px;"></div>
<div class="t" style="left:697.8px;top:609.6px;font-size:5.3px;color:#2a2a2a;transform:scaleX(0.900);">Dieser PC</div>
<div style="position:absolute;left:693.8px;top:620.0px;width:4.2px;height:3.6px;background:#38b0e8;border-radius:0.5px;"></div>
<div class="t" style="left:701.0px;top:619.1px;font-size:5.3px;color:#2a2a2a;transform:scaleX(0.900);">3D-Objekte</div>
<div style="position:absolute;left:693.8px;top:629.7px;width:4.2px;height:3.6px;background:#6f9fd8;border-radius:0.5px;"></div>
<div class="t" style="left:701.0px;top:628.9px;font-size:5.3px;color:#2a2a2a;transform:scaleX(0.900);">Bilder</div>
<div style="position:absolute;left:693.8px;top:639.5px;width:4.2px;height:3.6px;background:#2f8ae6;border-radius:0.5px;"></div>
<div class="t" style="left:701.0px;top:638.6px;font-size:5.3px;color:#2a2a2a;transform:scaleX(0.900);">Desktop</div>
<div style="position:absolute;left:693.8px;top:649.2px;width:4.2px;height:3.6px;background:#dde4ee;border-radius:0.5px;"></div>
<div class="t" style="left:701.0px;top:648.4px;font-size:5.3px;color:#2a2a2a;transform:scaleX(0.900);">Dokumente</div>
<div style="position:absolute;left:693.8px;top:659.0px;width:4.2px;height:3.6px;background:#1f6fd6;border-radius:0.5px;"></div>
<div class="t" style="left:701.0px;top:658.1px;font-size:5.3px;color:#2a2a2a;transform:scaleX(0.900);">Downloads</div>
<div style="position:absolute;left:698.0px;top:668.4px;width:1.6px;height:1.2px;background:#1f6fd6;"></div>
<div style="position:absolute;left:703.4px;top:669.2px;width:1.0px;height:0.8px;background:#777;"></div>
<div style="position:absolute;left:707.0px;top:669.2px;width:1.0px;height:0.8px;background:#999;"></div>
<div style="position:absolute;left:776.8px;top:473.6px;width:6.0px;height:195.6px;background:#f0f0f0;"></div>
<div style="position:absolute;left:777.2px;top:480.2px;width:5.2px;height:75.4px;background:#c2c2c2;"></div>
<svg style="left:778.2px;top:475.6px" width="3" height="2.6" viewBox="0 0 3.4 2.6"><path d="M0.3 2.2L1.7 0.6L3.1 2.2" fill="none" stroke="#555" stroke-width="0.8"/></svg>
<svg style="left:778.2px;top:665.4px" width="3" height="2.6" viewBox="0 0 3.4 2.6"><path d="M0.3 0.4L1.7 2L3.1 0.4" fill="none" stroke="#555" stroke-width="0.8"/></svg>
<div class="t" style="left:791.6px;top:475.8px;font-size:5.3px;color:#6a6a6a;transform:scaleX(0.920);">Name</div>
<div class="t" style="left:912.7px;top:475.8px;font-size:5.3px;color:#6a6a6a;transform:scaleX(0.941);">Änderungsdatum</div>
<div class="t" style="left:968.0px;top:475.8px;font-size:5.3px;color:#6a6a6a;transform:scaleX(0.913);">Typ</div>
<div class="t" style="left:1023.2px;top:475.8px;font-size:5.3px;color:#6a6a6a;transform:scaleX(0.866);">Größe</div>
<svg style="left:848.6px;top:472.6px" width="3.4" height="2.2" viewBox="0 0 3.4 2.2"><path d="M0.3 1.9L1.7 0.4L3.1 1.9" fill="none" stroke="#999" stroke-width="0.6"/></svg>
<div style="position:absolute;left:788.0px;top:538.6px;width:268.0px;height:8.4px;background:#e5f3ff;"></div>
<div style="position:absolute;left:788.0px;top:598.0px;width:268.0px;height:8.6px;background:#cce8ff;"></div>
<div style="position:absolute;left:794.0px;top:488.3px;width:3.2px;height:4.6px;background:#f2c54c;border-radius:0.6px;"></div>
<div class="t" style="left:800.0px;top:488.1px;font-size:5.3px;color:#1e1e1e;transform:scaleX(0.888);">1_Vorlesung_Mensch_Figur_Achsen</div>
<div class="t" style="left:912.7px;top:488.1px;font-size:5.3px;color:#6e6e6e;transform:scaleX(0.877);">30.03.2020 21:58</div>
<div class="t" style="left:968.0px;top:488.1px;font-size:5.3px;color:#6e6e6e;transform:scaleX(0.939);">Dateiordner</div>
<div style="position:absolute;left:794.0px;top:497.1px;width:3.2px;height:4.6px;background:#f2c54c;border-radius:0.6px;"></div>
<div class="t" style="left:800.0px;top:496.9px;font-size:5.3px;color:#1e1e1e;transform:scaleX(0.888);">2_Vorlesung_Bewegung_Skelett_Raum</div>
<div class="t" style="left:912.7px;top:496.9px;font-size:5.3px;color:#6e6e6e;transform:scaleX(0.877);">09.05.2020 21:25</div>
<div class="t" style="left:968.0px;top:496.9px;font-size:5.3px;color:#6e6e6e;transform:scaleX(0.939);">Dateiordner</div>
<div style="position:absolute;left:794.0px;top:505.8px;width:3.2px;height:4.6px;background:#f2c54c;border-radius:0.6px;"></div>
<div class="t" style="left:800.0px;top:505.6px;font-size:5.3px;color:#1e1e1e;transform:scaleX(0.888);">3_Vorlesung_Porträt</div>
<div class="t" style="left:912.7px;top:505.6px;font-size:5.3px;color:#6e6e6e;transform:scaleX(0.877);">06.04.2020 18:27</div>
<div class="t" style="left:968.0px;top:505.6px;font-size:5.3px;color:#6e6e6e;transform:scaleX(0.939);">Dateiordner</div>
<div style="position:absolute;left:794.0px;top:514.5px;width:3.2px;height:4.6px;background:#f2c54c;border-radius:0.6px;"></div>
<div class="t" style="left:800.0px;top:514.2px;font-size:5.3px;color:#1e1e1e;transform:scaleX(0.888);">4_Vorlesung_Didaktik_Figur_Fleck_Farbe</div>
<div class="t" style="left:912.7px;top:514.2px;font-size:5.3px;color:#6e6e6e;transform:scaleX(0.877);">30.03.2020 21:24</div>
<div class="t" style="left:968.0px;top:514.2px;font-size:5.3px;color:#6e6e6e;transform:scaleX(0.939);">Dateiordner</div>
<div style="position:absolute;left:794.0px;top:523.2px;width:3.2px;height:4.6px;background:#f2c54c;border-radius:0.6px;"></div>
<div class="t" style="left:800.0px;top:523.0px;font-size:5.3px;color:#1e1e1e;transform:scaleX(0.888);">5_Vorlesung_Handschriften</div>
<div class="t" style="left:912.7px;top:523.0px;font-size:5.3px;color:#6e6e6e;transform:scaleX(0.877);">30.03.2020 21:26</div>
<div class="t" style="left:968.0px;top:523.0px;font-size:5.3px;color:#6e6e6e;transform:scaleX(0.939);">Dateiordner</div>
<div style="position:absolute;left:794.0px;top:531.8px;width:3.2px;height:4.6px;background:#f2c54c;border-radius:0.6px;"></div>
<div class="t" style="left:800.0px;top:531.6px;font-size:5.3px;color:#1e1e1e;transform:scaleX(0.888);">6_Vorlesung_Illustrationen Flat Design_Bsp</div>
<div class="t" style="left:912.7px;top:531.6px;font-size:5.3px;color:#6e6e6e;transform:scaleX(0.877);">30.03.2020 21:24</div>
<div class="t" style="left:968.0px;top:531.6px;font-size:5.3px;color:#6e6e6e;transform:scaleX(0.939);">Dateiordner</div>
<div style="position:absolute;left:794.0px;top:540.4px;width:3.2px;height:4.6px;background:#f2c54c;border-radius:0.6px;"></div>
<div class="t" style="left:800.0px;top:540.1px;font-size:5.3px;color:#1e1e1e;transform:scaleX(0.888);">7_Vorlesung_Wallpaper</div>
<div class="t" style="left:912.7px;top:540.1px;font-size:5.3px;color:#6e6e6e;transform:scaleX(0.877);">30.03.2020 13:43</div>
<div class="t" style="left:968.0px;top:540.1px;font-size:5.3px;color:#6e6e6e;transform:scaleX(0.939);">Dateiordner</div>
<div style="position:absolute;left:794.0px;top:548.9px;width:3.2px;height:4.6px;background:#f2c54c;border-radius:0.6px;"></div>
<div class="t" style="left:800.0px;top:548.6px;font-size:5.3px;color:#1e1e1e;transform:scaleX(0.888);">8_Vorlesung _Skizzenbuch führen</div>
<div class="t" style="left:912.7px;top:548.6px;font-size:5.3px;color:#6e6e6e;transform:scaleX(0.877);">30.03.2020 21:01</div>
<div class="t" style="left:968.0px;top:548.6px;font-size:5.3px;color:#6e6e6e;transform:scaleX(0.939);">Dateiordner</div>
<div style="position:absolute;left:794.0px;top:557.5px;width:3.2px;height:4.6px;background:#f2c54c;border-radius:0.6px;"></div>
<div class="t" style="left:800.0px;top:557.2px;font-size:5.3px;color:#1e1e1e;transform:scaleX(0.888);">Üb 1_Figuren legen</div>
<div class="t" style="left:912.7px;top:557.2px;font-size:5.3px;color:#6e6e6e;transform:scaleX(0.886);">06.04.2020 11:58</div>
<div class="t" style="left:968.0px;top:557.2px;font-size:5.3px;color:#6e6e6e;transform:scaleX(0.939);">Dateiordner</div>
<div style="position:absolute;left:794.0px;top:566.1px;width:3.2px;height:4.6px;background:#f2c54c;border-radius:0.6px;"></div>
<div class="t" style="left:800.0px;top:565.9px;font-size:5.3px;color:#1e1e1e;transform:scaleX(0.888);">Üb 2a_Bewegung zeichnen</div>
<div class="t" style="left:912.7px;top:565.9px;font-size:5.3px;color:#6e6e6e;transform:scaleX(0.877);">06.04.2020 12:10</div>
<div class="t" style="left:968.0px;top:565.9px;font-size:5.3px;color:#6e6e6e;transform:scaleX(0.939);">Dateiordner</div>
<div style="position:absolute;left:794.0px;top:574.7px;width:3.2px;height:4.6px;background:#f2c54c;border-radius:0.6px;"></div>
<div class="t" style="left:800.0px;top:574.5px;font-size:5.3px;color:#1e1e1e;transform:scaleX(0.888);">Üb 2b_Figuren räumlich zeichnen</div>
<div class="t" style="left:912.7px;top:574.5px;font-size:5.3px;color:#6e6e6e;transform:scaleX(0.877);">09.05.2020 21:26</div>
<div class="t" style="left:968.0px;top:574.5px;font-size:5.3px;color:#6e6e6e;transform:scaleX(0.939);">Dateiordner</div>
<div style="position:absolute;left:794.0px;top:583.0px;width:3.2px;height:4.6px;background:#f2c54c;border-radius:0.6px;"></div>
<div class="t" style="left:800.0px;top:582.8px;font-size:5.3px;color:#1e1e1e;transform:scaleX(0.888);">Üb 2c_Figuren mit Modell zeichnen</div>
<div class="t" style="left:912.7px;top:582.8px;font-size:5.3px;color:#6e6e6e;transform:scaleX(0.877);">10.05.2020 08:59</div>
<div class="t" style="left:968.0px;top:582.8px;font-size:5.3px;color:#6e6e6e;transform:scaleX(0.939);">Dateiordner</div>
<div style="position:absolute;left:794.0px;top:591.5px;width:3.2px;height:4.6px;background:#f2c54c;border-radius:0.6px;"></div>
<div class="t" style="left:800.0px;top:591.2px;font-size:5.3px;color:#1e1e1e;transform:scaleX(0.888);">Üb 2d_Figuren aus der Vorstellung zeichnen</div>
<div class="t" style="left:912.7px;top:591.2px;font-size:5.3px;color:#6e6e6e;transform:scaleX(0.877);">09.05.2020 21:06</div>
<div class="t" style="left:968.0px;top:591.2px;font-size:5.3px;color:#6e6e6e;transform:scaleX(0.939);">Dateiordner</div>
<div style="position:absolute;left:794.0px;top:599.9px;width:3.2px;height:4.6px;background:#f2c54c;border-radius:0.6px;"></div>
<div class="t" style="left:800.0px;top:599.6px;font-size:5.3px;color:#1e1e1e;transform:scaleX(0.888);">Üb 3a, 3b, 3c_Porträt zeichnen</div>
<div class="t" style="left:912.7px;top:599.6px;font-size:5.3px;color:#6e6e6e;transform:scaleX(0.877);">08.06.2020 18:48</div>
<div class="t" style="left:968.0px;top:599.6px;font-size:5.3px;color:#6e6e6e;transform:scaleX(0.939);">Dateiordner</div>
<div style="position:absolute;left:794.0px;top:608.4px;width:3.2px;height:4.6px;background:#f2c54c;border-radius:0.6px;"></div>
<div class="t" style="left:800.0px;top:608.1px;font-size:5.3px;color:#1e1e1e;transform:scaleX(0.888);">Üb 4_Mein Skizzenbuch</div>
<div class="t" style="left:912.7px;top:608.1px;font-size:5.3px;color:#6e6e6e;transform:scaleX(0.877);">06.04.2020 13:40</div>
<div class="t" style="left:968.0px;top:608.1px;font-size:5.3px;color:#6e6e6e;transform:scaleX(0.939);">Dateiordner</div>
<div style="position:absolute;left:794.0px;top:616.9px;width:3.2px;height:4.6px;background:#f2c54c;border-radius:0.6px;"></div>
<div class="t" style="left:800.0px;top:616.6px;font-size:5.3px;color:#1e1e1e;transform:scaleX(0.888);">Üb 5_Handschrift finden</div>
<div class="t" style="left:912.7px;top:616.6px;font-size:5.3px;color:#6e6e6e;transform:scaleX(0.877);">06.04.2020 13:44</div>
<div class="t" style="left:968.0px;top:616.6px;font-size:5.3px;color:#6e6e6e;transform:scaleX(0.939);">Dateiordner</div>
<div class="t" style="left:683.5px;top:672.4px;font-size:5.3px;color:#3a3a3a;transform:scaleX(0.894);">15 Elemente</div>
<div class="t" style="left:719.4px;top:672.4px;font-size:5.3px;color:#3a3a3a;transform:scaleX(0.913);">1 Element ausgewählt</div>
<div style="position:absolute;left:1068.0px;top:666.6px;width:8.4px;height:8.4px;background:#d4e6f8;border:0.5px solid #9ec4ec;"></div>
<div style="position:absolute;left:1069.6px;top:669.0px;width:5.0px;height:3.6px;background:#fff;border:0.4px solid #8aa;"></div>
<div style="position:absolute;left:1079.6px;top:668.4px;width:5.2px;height:4.4px;background:#2c3f66;"></div>
<div style="position:absolute;left:1080.2px;top:669.0px;width:4.0px;height:1.6px;background:#9ec4ec;"></div>
<svg style="left:871.8px;top:686.0px" width="16.4" height="16.4" viewBox="-10 -10 20 20"><circle r="10" fill="#b2daf3"/><circle cx="0" cy="-2.2" r="2.5" fill="#fff"/><path d="M-4.6 4.8C-4.6 1.6 -2.6 1 0 1C2.6 1 4.6 1.6 4.6 4.8Z" fill="#fff"/></svg>
<svg style="left:894px;top:678px" width="244" height="33" viewBox="894 678 244 33">
<defs>
<filter id="bl" x="-5%" y="-20%" width="110%" height="140%"><feGaussianBlur stdDeviation="0.45"/></filter>
<linearGradient id="w2" x1="0" x2="1"><stop offset="0" stop-color="#c3c7cb"/><stop offset=".55" stop-color="#d2d5d8"/><stop offset="1" stop-color="#e0e2e4"/></linearGradient>
<clipPath id="c2"><rect x="894.9" y="679" width="60.1" height="30.8"/></clipPath>
<clipPath id="c3"><rect x="955" y="679" width="61" height="30.8"/></clipPath>
<clipPath id="c5"><rect x="1075.8" y="679" width="61.2" height="30.8"/></clipPath>
</defs>
<!-- thumb 2 -->
<g clip-path="url(#c2)"><rect x="894" y="678" width="62" height="33" fill="url(#w2)"/>
<g filter="url(#bl)">
<path d="M894 683L906 682L909.400 692L910 711H894Z" fill="#c2a274"/>
<path d="M898 686.200C902 684.600 907 686.800 909.200 692" fill="none" stroke="#3a3834" stroke-width="1.500"/>
<rect x="931.600" y="690" width="24" height="21" fill="#dddfe1"/>
<rect x="950" y="699" width="4" height="10" fill="#c9b99a"/>
<ellipse cx="923.200" cy="686.400" rx="3.900" ry="2.900" fill="#4a3c36"/>
<path d="M913.600 711C912.200 697 915 688.400 921.800 688.200C928.800 688 931.800 696 930.400 711Z" fill="#4b3b33"/>
<path d="M915 700C914.600 693 917.400 690 921.800 690C926.200 690 929 693 928.600 700C928.200 706 925.600 711 921.800 711C918 711 915.400 706 915 700Z" fill="#dcc4bb"/>
<path d="M916.800 697.200H920M923.600 697.200H926.800" stroke="#5a4640" stroke-width="0.800"/>
<path d="M919.600 705.400H924" stroke="#b07872" stroke-width="0.900"/>
<path d="M921.800 698V702.400" stroke="#c9aca2" stroke-width="0.800"/>
<path d="M927.600 706.500L935.800 705.500L937 711H926Z" fill="#8f98bb"/>
<path d="M929 708.400L936 707.400" stroke="#eef0f6" stroke-width="0.900"/>
</g></g>
<!-- thumb 3 -->
<g clip-path="url(#c3)"><rect x="955" y="678" width="62" height="33" fill="#dfe3e6"/>
<g filter="url(#bl)">
<rect x="974.800" y="678" width="17.800" height="33" fill="#c4965a"/>
<rect x="992.600" y="678" width="25" height="33" fill="#e3e5e5"/>
<rect x="997.900" y="686.700" width="10.400" height="24" fill="#3d4145"/>
<path d="M971.800 711C971 694 974 683.800 982.200 683.600C990.400 683.400 993 694 992.200 711Z" fill="#4c3a2b"/>
<path d="M977.200 696C976.800 691 979 688.800 982.400 688.800C985.800 688.800 988 691 987.600 696C987.200 701 985.400 704 982.400 704C979.400 704 977.600 701 977.200 696Z" fill="#c99a89"/>
<path d="M978.800 694.400H981.400M983.800 694.400H986.400" stroke="#4a342c" stroke-width="0.800"/>
<path d="M981.200 700.200H984" stroke="#a4625c" stroke-width="0.700"/>
<path d="M975.400 699.400C977 697.800 979.600 699.400 980.200 702L984.800 706L982 711H975.600Z" fill="#d2aa9a"/>
<path d="M966.800 711C968 707 972 705.800 976 706L982.400 709L990 706C994 705.800 997 707 998 711Z" fill="#6b5b50"/>
</g></g>
<!-- thumb 4 -->
<rect x="1016.200" y="679" width="59.600" height="30.800" fill="#2b2b2c"/>
<!-- thumb 5 -->
<g clip-path="url(#c5)"><rect x="1075" y="678" width="63" height="33" fill="#d9d8d4"/>
<g filter="url(#bl)">
<path d="M1075 681.500L1110 679.800M1075 685L1106 682.600M1075 688.600L1104 686" stroke="#aaa39a" stroke-width="1.100"/>
<rect x="1078" y="691.500" width="9" height="11" fill="#eceef0"/><rect x="1089.500" y="692" width="8.500" height="10.500" fill="#e9ebee"/>
<path d="M1077 691H1100M1088.200 691V703M1077 703.400H1100" stroke="#8c8780" stroke-width="1.100"/>
<rect x="1075" y="703.800" width="26" height="7" fill="#b9b5b0"/>
<rect x="1123.600" y="678" width="14" height="33" fill="#e9e9e5"/>
<rect x="1126" y="683" width="8.600" height="7" fill="#7f8786"/><rect x="1126.500" y="695" width="7" height="6.500" fill="#b4bab8"/><path d="M1124 692.400H1137M1124 703H1137" stroke="#c4c4be" stroke-width="0.800"/>
<path d="M1104.800 711C1103.600 694 1106.400 682.800 1113.600 682.600C1120.800 682.400 1123 694 1122 711Z" fill="#a37c54"/>
<path d="M1108.400 692C1108 687.600 1110 685.800 1112.800 685.800C1115.600 685.800 1117.400 687.600 1117 692C1116.600 696.600 1115 699.600 1112.600 699.600C1110.200 699.600 1108.800 696.600 1108.400 692Z" fill="#dcae9c"/>
<path d="M1109 690.400H1112M1113.600 690.400H1116.600" stroke="#54423a" stroke-width="0.900"/>
<path d="M1111.400 696.200H1114" stroke="#b0605c" stroke-width="0.800"/>
<path d="M1098.600 711C1099.400 705 1104 702.200 1108.600 701.800L1112.800 704.400L1117 701.800C1121 702.200 1123.400 706 1123.800 711Z" fill="#9c5d6b"/>
</g></g>
</svg>
<svg style="left:1038.0px;top:686.0px" width="16.2" height="16.2" viewBox="-10 -10 20 20"><circle r="10" fill="#b2daf3"/><circle cx="0" cy="-2.2" r="2.5" fill="#fff"/><path d="M-4.6 4.8C-4.6 1.6 -2.6 1 0 1C2.6 1 4.6 1.6 4.6 4.8Z" fill="#fff"/></svg>
<div class="t" style="left:1019.6px;top:704.8px;font-size:3.6px;color:#f0f0f0;transform:scaleX(0.870);">Leonie</div>
<div style="position:absolute;left:466.0px;top:713.6px;width:53.6px;height:5.0px;background:#9b9b9b;border-radius:2px 2px 0 0;"></div>
<div style="position:absolute;left:524.7px;top:713.6px;width:53.6px;height:5.0px;background:#979797;border-radius:2px 2px 0 0;"></div>
<div style="position:absolute;left:583.4px;top:713.6px;width:53.6px;height:5.0px;background:#949494;border-radius:2px 2px 0 0;"></div>
<div style="position:absolute;left:642.1px;top:713.6px;width:53.6px;height:5.0px;background:#b0b0b0;border-radius:2px 2px 0 0;"></div>
<div style="position:absolute;left:700.8px;top:713.6px;width:53.6px;height:5.0px;background:#969696;border-radius:2px 2px 0 0;"></div>
<div style="position:absolute;left:759.5px;top:713.6px;width:53.6px;height:5.0px;background:#a29c96;border-radius:2px 2px 0 0;"></div>
<div style="position:absolute;left:818.2px;top:713.6px;width:53.6px;height:5.0px;background:#b5aea6;border-radius:2px 2px 0 0;"></div>
<div style="position:absolute;left:876.9px;top:713.6px;width:53.6px;height:5.0px;background:#bab2aa;border-radius:2px 2px 0 0;"></div>
<div style="position:absolute;left:935.6px;top:713.6px;width:53.6px;height:5.0px;background:#b8b0a8;border-radius:2px 2px 0 0;"></div>
<div style="position:absolute;left:994.3px;top:713.6px;width:53.6px;height:5.0px;background:#b6aea6;border-radius:2px 2px 0 0;"></div>
<div style="position:absolute;left:1053.0px;top:713.6px;width:53.6px;height:5.0px;background:#b9b1a9;border-radius:2px 2px 0 0;"></div>
<div style="position:absolute;left:1111.7px;top:713.6px;width:53.6px;height:5.0px;background:#b7afa7;border-radius:2px 2px 0 0;"></div>
<div style="position:absolute;left:642.0px;top:713.6px;width:18.0px;height:5.0px;background:#dcdcdc;border-radius:2px 0 0 0;"></div>
<div style="position:absolute;left:1171.0px;top:712.2px;width:54.0px;height:7.0px;background:#050506;border:1.5px solid #f6f6f6;border-top:3.2px solid #f8f8f8;border-bottom:1px solid #d8d8d8;"></div>
<div style="position:absolute;left:466.0px;top:718.6px;width:705.0px;height:1.4px;background:#8d8884;"></div>
</div></div>
</body>
</html>
